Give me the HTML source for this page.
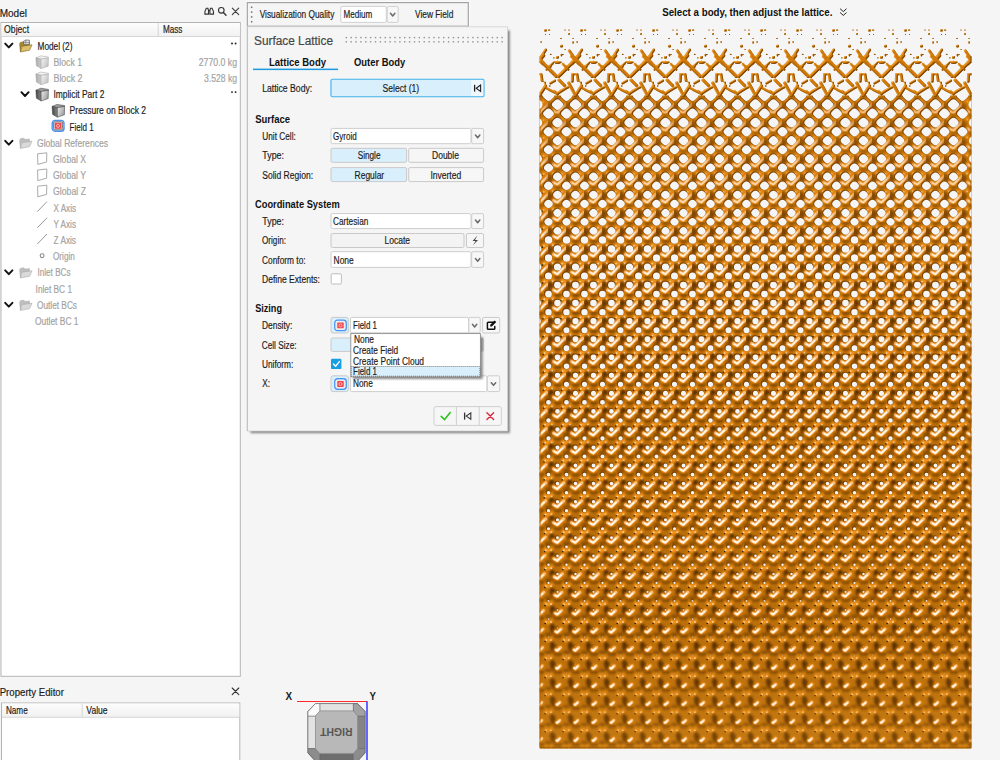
<!DOCTYPE html>
<html><head><meta charset="utf-8"><title>Surface Lattice</title>
<style>
html,body{margin:0;padding:0;background:#f5f5f5;width:1000px;height:760px;overflow:hidden}
svg{display:block;font-family:"Liberation Sans",sans-serif}
text{white-space:pre}
</style></head><body>
<svg width="1000" height="760" viewBox="0 0 1000 760">
<rect width="1000" height="760" fill="#f5f5f5"/>
<g id="model-browser">
<text x="-0.30" y="16.85" stroke="#1c1c1c" stroke-width="0.18" font-size="10" fill="#1c1c1c" textLength="27.30" lengthAdjust="spacingAndGlyphs">Model</text>
<g fill="none" stroke="#333" stroke-width="1.1" stroke-linecap="round">
<path d="M206.3 8.3h1.6l.6 2.2v3.6h-3.6v-2.6zM212.1 8.3h-1.6l-.6 2.2v3.6h3.6v-2.6zM208.5 10.4h1.4"/>
<circle cx="221.3" cy="10.3" r="2.8"/><path d="M223.4 12.5L226 15.2" stroke-width="1.4"/>
<path d="M232.3 8.1L238.7 14.6M238.7 8.1L232.3 14.6" stroke-width="1.15" stroke="#3c3c3c"/>
</g>
<rect x="1.00" y="22.50" width="239.30" height="653.80" fill="#ffffff" stroke="#b4b4b4" stroke-width="1"/>
<linearGradient id="hdr" x1="0" y1="0" x2="0" y2="1"><stop offset="0" stop-color="#fdfdfd"/><stop offset="1" stop-color="#f1f1f1"/></linearGradient>
<rect x="1.50" y="23.00" width="238.30" height="13.20" fill="url(#hdr)"/>
<path d="M1.5 36.5H239.8M158.2 23V36.5" stroke="#d6d6d6" stroke-width="1" fill="none"/>
<text x="4.10" y="33.35" stroke="#1c1c1c" stroke-width="0.18" font-size="10" fill="#1c1c1c" textLength="25.00" lengthAdjust="spacingAndGlyphs">Object</text>
<text x="162.90" y="33.35" stroke="#1c1c1c" stroke-width="0.18" font-size="10" fill="#1c1c1c" textLength="19.50" lengthAdjust="spacingAndGlyphs">Mass</text>
<path d="M5.2 43.60L8.8 47.40L12.4 43.60" fill="none" stroke="#111" stroke-width="1.95" stroke-linecap="round" stroke-linejoin="round"/>
<g transform="translate(0,0.8)">
<g transform="translate(19.00,39.80)">
<path d="M0.6 3.2L1.6 1.6L5 1.2L6 2.4L10.4 2L10.6 5L2.2 6L1.4 11.2Z" fill="#a8872e" stroke="#7d621c" stroke-width="0.5"/>
<path d="M1.4 11.4L3.2 5.6L13 4.2L10.6 9.6Z" fill="#dcc069" stroke="#7d621c" stroke-width="0.6"/>
</g>
<g transform="translate(22.6,38.8)"><path d="M1 1.6L3.2 0.4L6.8 0.6L6.8 4.4L3.2 5.2L1 4.4Z" fill="#ececec" stroke="#555" stroke-width="0.7"/><path d="M3.2 0.6V5M1 2.8H6.8" stroke="#666" stroke-width="0.6"/></g>
</g>
<text x="37.50" y="49.55" stroke="#1c1c1c" stroke-width="0.18" font-size="10" fill="#1c1c1c" textLength="35.00" lengthAdjust="spacingAndGlyphs">Model (2)</text>
<g transform="translate(35.60,55.60)">
<linearGradient id="cg35_1l" x1="0" y1="0" x2="1" y2="0"><stop offset="0" stop-color="#aaaaaa"/><stop offset="1" stop-color="#cfcfcf"/></linearGradient>
<linearGradient id="cg35_1r" x1="0" y1="0" x2="1" y2="0.6"><stop offset="0" stop-color="#f6f6f6"/><stop offset="1" stop-color="#c4c4c4"/></linearGradient>
<path d="M0.3 2.2L5.2 0.2L12.8 1.4L12.8 2.4L5.6 3.6Z" fill="#f0f0f0" stroke="#a4a4a4" stroke-width="0.5"/>
<path d="M0.3 2.2L5.6 3.6L5.6 13L0.8 10.2Z" fill="url(#cg35_1l)" stroke="#a4a4a4" stroke-width="0.5"/>
<path d="M5.6 3.6L12.8 2.2L12.6 10.6L5.6 13Z" fill="url(#cg35_1r)" stroke="#a4a4a4" stroke-width="0.5"/>
</g>
<text x="53.50" y="65.75" stroke="#a2a2a2" stroke-width="0.18" font-size="10" fill="#a2a2a2" textLength="28.50" lengthAdjust="spacingAndGlyphs">Block 1</text>
<g transform="translate(35.60,71.80)">
<linearGradient id="cg35_2l" x1="0" y1="0" x2="1" y2="0"><stop offset="0" stop-color="#aaaaaa"/><stop offset="1" stop-color="#cfcfcf"/></linearGradient>
<linearGradient id="cg35_2r" x1="0" y1="0" x2="1" y2="0.6"><stop offset="0" stop-color="#f6f6f6"/><stop offset="1" stop-color="#c4c4c4"/></linearGradient>
<path d="M0.3 2.2L5.2 0.2L12.8 1.4L12.8 2.4L5.6 3.6Z" fill="#f0f0f0" stroke="#a4a4a4" stroke-width="0.5"/>
<path d="M0.3 2.2L5.6 3.6L5.6 13L0.8 10.2Z" fill="url(#cg35_2l)" stroke="#a4a4a4" stroke-width="0.5"/>
<path d="M5.6 3.6L12.8 2.2L12.6 10.6L5.6 13Z" fill="url(#cg35_2r)" stroke="#a4a4a4" stroke-width="0.5"/>
</g>
<text x="53.50" y="81.95" stroke="#a2a2a2" stroke-width="0.18" font-size="10" fill="#a2a2a2" textLength="29.00" lengthAdjust="spacingAndGlyphs">Block 2</text>
<path d="M21.4 92.20L25.0 96.00L28.6 92.20" fill="none" stroke="#111" stroke-width="1.95" stroke-linecap="round" stroke-linejoin="round"/>
<g transform="translate(35.60,88.00)">
<linearGradient id="cg35_3l" x1="0" y1="0" x2="1" y2="0"><stop offset="0" stop-color="#444444"/><stop offset="1" stop-color="#8a8a8a"/></linearGradient>
<linearGradient id="cg35_3r" x1="0" y1="0" x2="1" y2="0.6"><stop offset="0" stop-color="#f2f2f2"/><stop offset="1" stop-color="#9c9c9c"/></linearGradient>
<path d="M0.3 2.2L5.2 0.2L12.8 1.4L12.8 2.4L5.6 3.6Z" fill="#9a9a9a" stroke="#3a3a3a" stroke-width="0.5"/>
<path d="M0.3 2.2L5.6 3.6L5.6 13L0.8 10.2Z" fill="url(#cg35_3l)" stroke="#3a3a3a" stroke-width="0.5"/>
<path d="M5.6 3.6L12.8 2.2L12.6 10.6L5.6 13Z" fill="url(#cg35_3r)" stroke="#3a3a3a" stroke-width="0.5"/>
</g>
<text x="53.40" y="98.15" stroke="#1c1c1c" stroke-width="0.18" font-size="10" fill="#1c1c1c" textLength="51.00" lengthAdjust="spacingAndGlyphs">Implicit Part 2</text>
<g transform="translate(51.80,104.20)">
<linearGradient id="cg51_4l" x1="0" y1="0" x2="1" y2="0"><stop offset="0" stop-color="#444444"/><stop offset="1" stop-color="#8a8a8a"/></linearGradient>
<linearGradient id="cg51_4r" x1="0" y1="0" x2="1" y2="0.6"><stop offset="0" stop-color="#f2f2f2"/><stop offset="1" stop-color="#9c9c9c"/></linearGradient>
<path d="M0.3 2.2L5.2 0.2L12.8 1.4L12.8 2.4L5.6 3.6Z" fill="#9a9a9a" stroke="#3a3a3a" stroke-width="0.5"/>
<path d="M0.3 2.2L5.6 3.6L5.6 13L0.8 10.2Z" fill="url(#cg51_4l)" stroke="#3a3a3a" stroke-width="0.5"/>
<path d="M5.6 3.6L12.8 2.2L12.6 10.6L5.6 13Z" fill="url(#cg51_4r)" stroke="#3a3a3a" stroke-width="0.5"/>
</g>
<text x="69.60" y="114.35" stroke="#1c1c1c" stroke-width="0.18" font-size="10" fill="#1c1c1c" textLength="76.50" lengthAdjust="spacingAndGlyphs">Pressure on Block 2</text>
<g transform="translate(51.60,119.80) scale(1.0)">
<rect x="0.6" y="0.6" width="11.8" height="10.8" rx="2.8" fill="#e9f1fd" stroke="#4a94f2" stroke-width="1.4"/>
<rect x="2" y="1.9" width="9" height="8.2" rx="1.2" fill="#d6d6d6" stroke="#626262" stroke-width="0.8"/>
<rect x="3.2" y="3" width="6.6" height="6" rx="0.5" fill="#f0444d"/>
<circle cx="6.5" cy="6" r="1.55" fill="none" stroke="#ffd4d6" stroke-width="0.8"/>
</g>
<text x="69.60" y="130.55" stroke="#1c1c1c" stroke-width="0.18" font-size="10" fill="#1c1c1c" textLength="24.00" lengthAdjust="spacingAndGlyphs">Field 1</text>
<path d="M5.2 140.80L8.8 144.60L12.4 140.80" fill="none" stroke="#111" stroke-width="1.95" stroke-linecap="round" stroke-linejoin="round"/>
<g transform="translate(19.00,137.00)">
<path d="M0.6 3.2L1.6 1.6L5 1.2L6 2.4L10.4 2L10.6 5L2.2 6L1.4 11.2Z" fill="#bebebe" stroke="#aaaaaa" stroke-width="0.5"/>
<path d="M1.4 11.4L3.2 5.6L13 4.2L10.6 9.6Z" fill="#dadada" stroke="#aaaaaa" stroke-width="0.6"/>
</g>
<text x="37.00" y="146.75" stroke="#a2a2a2" stroke-width="0.18" font-size="10" fill="#a2a2a2" textLength="71.00" lengthAdjust="spacingAndGlyphs">Global References</text>
<path d="M37.60 153.80L46.80 152.80L46.60 162.00L37.80 164.40Z" fill="#fff" stroke="#a0a0a0" stroke-width="0.9" stroke-linejoin="round"/>
<text x="53.00" y="162.95" stroke="#a2a2a2" stroke-width="0.18" font-size="10" fill="#a2a2a2" textLength="33.00" lengthAdjust="spacingAndGlyphs">Global X</text>
<path d="M37.60 170.00L46.80 169.00L46.60 178.20L37.80 180.60Z" fill="#fff" stroke="#a0a0a0" stroke-width="0.9" stroke-linejoin="round"/>
<text x="53.00" y="179.15" stroke="#a2a2a2" stroke-width="0.18" font-size="10" fill="#a2a2a2" textLength="33.00" lengthAdjust="spacingAndGlyphs">Global Y</text>
<path d="M37.60 186.20L46.80 185.20L46.60 194.40L37.80 196.80Z" fill="#fff" stroke="#a0a0a0" stroke-width="0.9" stroke-linejoin="round"/>
<text x="53.00" y="195.35" stroke="#a2a2a2" stroke-width="0.18" font-size="10" fill="#a2a2a2" textLength="33.00" lengthAdjust="spacingAndGlyphs">Global Z</text>
<path d="M37.30 211.60L47.00 201.60" stroke="#8c8c8c" stroke-width="0.9" fill="none"/>
<text x="53.50" y="211.55" stroke="#a2a2a2" stroke-width="0.18" font-size="10" fill="#a2a2a2" textLength="22.50" lengthAdjust="spacingAndGlyphs">X Axis</text>
<path d="M37.30 227.80L47.00 217.80" stroke="#8c8c8c" stroke-width="0.9" fill="none"/>
<text x="53.50" y="227.75" stroke="#a2a2a2" stroke-width="0.18" font-size="10" fill="#a2a2a2" textLength="22.50" lengthAdjust="spacingAndGlyphs">Y Axis</text>
<path d="M37.30 244.00L47.00 234.00" stroke="#8c8c8c" stroke-width="0.9" fill="none"/>
<text x="53.50" y="243.95" stroke="#a2a2a2" stroke-width="0.18" font-size="10" fill="#a2a2a2" textLength="22.50" lengthAdjust="spacingAndGlyphs">Z Axis</text>
<circle cx="42.1" cy="255.70" r="1.9" fill="none" stroke="#8c8c8c" stroke-width="1.1"/>
<text x="53.00" y="260.15" stroke="#a2a2a2" stroke-width="0.18" font-size="10" fill="#a2a2a2" textLength="21.80" lengthAdjust="spacingAndGlyphs">Origin</text>
<path d="M5.2 270.40L8.8 274.20L12.4 270.40" fill="none" stroke="#111" stroke-width="1.95" stroke-linecap="round" stroke-linejoin="round"/>
<g transform="translate(19.00,266.60)">
<path d="M0.6 3.2L1.6 1.6L5 1.2L6 2.4L10.4 2L10.6 5L2.2 6L1.4 11.2Z" fill="#bebebe" stroke="#aaaaaa" stroke-width="0.5"/>
<path d="M1.4 11.4L3.2 5.6L13 4.2L10.6 9.6Z" fill="#dadada" stroke="#aaaaaa" stroke-width="0.6"/>
</g>
<text x="37.50" y="276.35" stroke="#a2a2a2" stroke-width="0.18" font-size="10" fill="#a2a2a2" textLength="33.00" lengthAdjust="spacingAndGlyphs">Inlet BCs</text>
<text x="35.60" y="292.55" stroke="#a2a2a2" stroke-width="0.18" font-size="10" fill="#a2a2a2" textLength="36.40" lengthAdjust="spacingAndGlyphs">Inlet BC 1</text>
<path d="M5.2 302.80L8.8 306.60L12.4 302.80" fill="none" stroke="#111" stroke-width="1.95" stroke-linecap="round" stroke-linejoin="round"/>
<g transform="translate(19.00,299.00)">
<path d="M0.6 3.2L1.6 1.6L5 1.2L6 2.4L10.4 2L10.6 5L2.2 6L1.4 11.2Z" fill="#bebebe" stroke="#aaaaaa" stroke-width="0.5"/>
<path d="M1.4 11.4L3.2 5.6L13 4.2L10.6 9.6Z" fill="#dadada" stroke="#aaaaaa" stroke-width="0.6"/>
</g>
<text x="37.00" y="308.75" stroke="#a2a2a2" stroke-width="0.18" font-size="10" fill="#a2a2a2" textLength="40.00" lengthAdjust="spacingAndGlyphs">Outlet BCs</text>
<text x="35.00" y="324.95" stroke="#a2a2a2" stroke-width="0.18" font-size="10" fill="#a2a2a2" textLength="43.50" lengthAdjust="spacingAndGlyphs">Outlet BC 1</text>
<text x="198.70" y="65.75" stroke="#a2a2a2" stroke-width="0.18" font-size="10" fill="#a2a2a2" textLength="38.40" lengthAdjust="spacingAndGlyphs">2770.0 kg</text>
<text x="204.00" y="81.95" stroke="#a2a2a2" stroke-width="0.18" font-size="10" fill="#a2a2a2" textLength="33.10" lengthAdjust="spacingAndGlyphs">3.528 kg</text>
<circle cx="232" cy="43.50" r="0.95" fill="#222"/><circle cx="235.6" cy="43.50" r="0.95" fill="#222"/>
<circle cx="232" cy="92.10" r="0.95" fill="#222"/><circle cx="235.6" cy="92.10" r="0.95" fill="#222"/>
</g>
<g id="prop-editor">
<text x="-0.30" y="695.75" stroke="#1c1c1c" stroke-width="0.18" font-size="10" fill="#1c1c1c" textLength="64.20" lengthAdjust="spacingAndGlyphs">Property Editor</text>
<path d="M232.2 688L238.8 694.6M238.8 688L232.2 694.6" stroke="#333" stroke-width="1.1" fill="none" stroke-linecap="round"/>
<rect x="1.50" y="703.00" width="238.30" height="62.00" fill="#ffffff" stroke="#b4b4b4" stroke-width="1"/>
<rect x="2.00" y="703.50" width="237.30" height="13.50" fill="url(#hdr)"/>
<path d="M2 717.3H239.3M82.2 703.5V717.3" stroke="#d6d6d6" stroke-width="1" fill="none"/>
<text x="5.90" y="714.35" stroke="#1c1c1c" stroke-width="0.18" font-size="10" fill="#1c1c1c" textLength="21.80" lengthAdjust="spacingAndGlyphs">Name</text>
<text x="86.30" y="714.35" stroke="#1c1c1c" stroke-width="0.18" font-size="10" fill="#1c1c1c" textLength="21.30" lengthAdjust="spacingAndGlyphs">Value</text>
</g>
<g id="toolbar">
<rect x="246.40" y="1.70" width="222.80" height="25.40" fill="none" stroke="#fdfdfd" stroke-width="0.9"/>
<rect x="247.30" y="2.60" width="221.00" height="23.60" fill="#f5f5f5" stroke="#a0a0a0" stroke-width="1.15"/>
<rect x="250.9" y="6.55" width="1.5" height="1.5" fill="#707070"/>
<rect x="250.9" y="11.35" width="1.5" height="1.5" fill="#707070"/>
<rect x="250.9" y="16.15" width="1.5" height="1.5" fill="#707070"/>
<rect x="250.9" y="20.95" width="1.5" height="1.5" fill="#707070"/>
<text x="259.70" y="18.45" stroke="#1c1c1c" stroke-width="0.18" font-size="10" fill="#1c1c1c" textLength="74.60" lengthAdjust="spacingAndGlyphs">Visualization Quality</text>
<rect x="340.80" y="6.40" width="45.50" height="16.00" fill="#ffffff" stroke="#cfcfcf" stroke-width="1" rx="1.5"/>
<text x="343.40" y="18.45" stroke="#1c1c1c" stroke-width="0.18" font-size="10" fill="#1c1c1c" textLength="28.80" lengthAdjust="spacingAndGlyphs">Medium</text>
<rect x="387.20" y="6.40" width="11.00" height="16.00" fill="#f7f7f7" stroke="#cfcfcf" stroke-width="1" rx="1.5"/>
<path d="M390.50 13.30L392.70 15.90L394.90 13.30" fill="none" stroke="#6a6a6a" stroke-width="1.5" stroke-linecap="round" stroke-linejoin="round"/>
<text x="415.00" y="18.45" stroke="#1c1c1c" stroke-width="0.18" font-size="10" fill="#1c1c1c" textLength="38.30" lengthAdjust="spacingAndGlyphs">View Field</text>
</g>
<g id="panel">
<defs><filter id="blur2" x="-10%" y="-10%" width="120%" height="120%"><feGaussianBlur stdDeviation="1.1"/></filter></defs>
<rect x="250.5" y="30.5" width="259.3" height="402.6" fill="#6e6e6e" filter="url(#blur2)" opacity="0.85"/>
<rect x="247.30" y="26.80" width="260.30" height="404.20" fill="#f5f5f5" stroke="#d2d2d2" stroke-width="0.8"/>
<path d="M247.3 27V431" stroke="#bdbdbd" stroke-width="1"/>
<text x="254.00" y="45.05" stroke="#454545" stroke-width="0.18" font-size="12" fill="#454545" textLength="79.00" lengthAdjust="spacingAndGlyphs">Surface Lattice</text>
<rect x="345.60" y="36.9" width="1.4" height="1.4" fill="#939393"/><rect x="345.60" y="41.1" width="1.4" height="1.4" fill="#939393"/>
<rect x="350.47" y="36.9" width="1.4" height="1.4" fill="#939393"/><rect x="350.47" y="41.1" width="1.4" height="1.4" fill="#939393"/>
<rect x="355.34" y="36.9" width="1.4" height="1.4" fill="#939393"/><rect x="355.34" y="41.1" width="1.4" height="1.4" fill="#939393"/>
<rect x="360.21" y="36.9" width="1.4" height="1.4" fill="#939393"/><rect x="360.21" y="41.1" width="1.4" height="1.4" fill="#939393"/>
<rect x="365.08" y="36.9" width="1.4" height="1.4" fill="#939393"/><rect x="365.08" y="41.1" width="1.4" height="1.4" fill="#939393"/>
<rect x="369.95" y="36.9" width="1.4" height="1.4" fill="#939393"/><rect x="369.95" y="41.1" width="1.4" height="1.4" fill="#939393"/>
<rect x="374.82" y="36.9" width="1.4" height="1.4" fill="#939393"/><rect x="374.82" y="41.1" width="1.4" height="1.4" fill="#939393"/>
<rect x="379.69" y="36.9" width="1.4" height="1.4" fill="#939393"/><rect x="379.69" y="41.1" width="1.4" height="1.4" fill="#939393"/>
<rect x="384.56" y="36.9" width="1.4" height="1.4" fill="#939393"/><rect x="384.56" y="41.1" width="1.4" height="1.4" fill="#939393"/>
<rect x="389.43" y="36.9" width="1.4" height="1.4" fill="#939393"/><rect x="389.43" y="41.1" width="1.4" height="1.4" fill="#939393"/>
<rect x="394.30" y="36.9" width="1.4" height="1.4" fill="#939393"/><rect x="394.30" y="41.1" width="1.4" height="1.4" fill="#939393"/>
<rect x="399.17" y="36.9" width="1.4" height="1.4" fill="#939393"/><rect x="399.17" y="41.1" width="1.4" height="1.4" fill="#939393"/>
<rect x="404.04" y="36.9" width="1.4" height="1.4" fill="#939393"/><rect x="404.04" y="41.1" width="1.4" height="1.4" fill="#939393"/>
<rect x="408.91" y="36.9" width="1.4" height="1.4" fill="#939393"/><rect x="408.91" y="41.1" width="1.4" height="1.4" fill="#939393"/>
<rect x="413.78" y="36.9" width="1.4" height="1.4" fill="#939393"/><rect x="413.78" y="41.1" width="1.4" height="1.4" fill="#939393"/>
<rect x="418.65" y="36.9" width="1.4" height="1.4" fill="#939393"/><rect x="418.65" y="41.1" width="1.4" height="1.4" fill="#939393"/>
<rect x="423.52" y="36.9" width="1.4" height="1.4" fill="#939393"/><rect x="423.52" y="41.1" width="1.4" height="1.4" fill="#939393"/>
<rect x="428.39" y="36.9" width="1.4" height="1.4" fill="#939393"/><rect x="428.39" y="41.1" width="1.4" height="1.4" fill="#939393"/>
<rect x="433.26" y="36.9" width="1.4" height="1.4" fill="#939393"/><rect x="433.26" y="41.1" width="1.4" height="1.4" fill="#939393"/>
<rect x="438.13" y="36.9" width="1.4" height="1.4" fill="#939393"/><rect x="438.13" y="41.1" width="1.4" height="1.4" fill="#939393"/>
<rect x="443.00" y="36.9" width="1.4" height="1.4" fill="#939393"/><rect x="443.00" y="41.1" width="1.4" height="1.4" fill="#939393"/>
<rect x="447.87" y="36.9" width="1.4" height="1.4" fill="#939393"/><rect x="447.87" y="41.1" width="1.4" height="1.4" fill="#939393"/>
<rect x="452.74" y="36.9" width="1.4" height="1.4" fill="#939393"/><rect x="452.74" y="41.1" width="1.4" height="1.4" fill="#939393"/>
<rect x="457.61" y="36.9" width="1.4" height="1.4" fill="#939393"/><rect x="457.61" y="41.1" width="1.4" height="1.4" fill="#939393"/>
<rect x="462.48" y="36.9" width="1.4" height="1.4" fill="#939393"/><rect x="462.48" y="41.1" width="1.4" height="1.4" fill="#939393"/>
<rect x="467.35" y="36.9" width="1.4" height="1.4" fill="#939393"/><rect x="467.35" y="41.1" width="1.4" height="1.4" fill="#939393"/>
<rect x="472.22" y="36.9" width="1.4" height="1.4" fill="#939393"/><rect x="472.22" y="41.1" width="1.4" height="1.4" fill="#939393"/>
<rect x="477.09" y="36.9" width="1.4" height="1.4" fill="#939393"/><rect x="477.09" y="41.1" width="1.4" height="1.4" fill="#939393"/>
<rect x="481.96" y="36.9" width="1.4" height="1.4" fill="#939393"/><rect x="481.96" y="41.1" width="1.4" height="1.4" fill="#939393"/>
<rect x="486.83" y="36.9" width="1.4" height="1.4" fill="#939393"/><rect x="486.83" y="41.1" width="1.4" height="1.4" fill="#939393"/>
<rect x="491.70" y="36.9" width="1.4" height="1.4" fill="#939393"/><rect x="491.70" y="41.1" width="1.4" height="1.4" fill="#939393"/>
<rect x="496.57" y="36.9" width="1.4" height="1.4" fill="#939393"/><rect x="496.57" y="41.1" width="1.4" height="1.4" fill="#939393"/>
<rect x="501.44" y="36.9" width="1.4" height="1.4" fill="#939393"/><rect x="501.44" y="41.1" width="1.4" height="1.4" fill="#939393"/>
<text x="269.00" y="66.05" font-size="10" fill="#111" font-weight="bold" textLength="57.00" lengthAdjust="spacingAndGlyphs">Lattice Body</text>
<text x="354.00" y="66.05" font-size="10" fill="#111" font-weight="bold" textLength="51.20" lengthAdjust="spacingAndGlyphs">Outer Body</text>
<rect x="253.00" y="68.60" width="85.00" height="1.50" fill="#1b9ae0"/>
<text x="262.20" y="92.25" stroke="#1c1c1c" stroke-width="0.18" font-size="10" fill="#1c1c1c" textLength="50.00" lengthAdjust="spacingAndGlyphs">Lattice Body:</text>
<rect x="331.00" y="79.20" width="153.00" height="17.60" fill="#d9f0fc" stroke="#3fb4ea" stroke-width="1.15" rx="1.2"/>
<rect x="471.20" y="80.00" width="12.10" height="16.00" fill="#eef8fd"/>
<text x="382.50" y="92.25" stroke="#1c1c1c" stroke-width="0.18" font-size="10" fill="#1c1c1c" textLength="36.70" lengthAdjust="spacingAndGlyphs">Select (1)</text>
<path d="M474.6 84.8V91.6" stroke="#222" stroke-width="1.3" fill="none"/><path d="M480.6 85L476.2 88.2L480.6 91.4Z" fill="none" stroke="#222" stroke-width="1.1" stroke-linejoin="miter"/>
<text x="255.20" y="123.35" font-size="10" fill="#111" font-weight="bold" textLength="34.80" lengthAdjust="spacingAndGlyphs">Surface</text>
<text x="262.30" y="139.75" stroke="#1c1c1c" stroke-width="0.18" font-size="10" fill="#1c1c1c" textLength="33.50" lengthAdjust="spacingAndGlyphs">Unit Cell:</text>
<rect x="331.00" y="128.40" width="140.00" height="15.30" fill="#ffffff" stroke="#cdcdcd" stroke-width="1" rx="1.5"/>
<rect x="471.70" y="128.40" width="11.90" height="15.30" fill="#f7f7f7" stroke="#cdcdcd" stroke-width="1" rx="1.5"/>
<path d="M475.45 135.05L477.65 137.65L479.85 135.05" fill="none" stroke="#6a6a6a" stroke-width="1.5" stroke-linecap="round" stroke-linejoin="round"/>
<text x="333.00" y="139.75" stroke="#1c1c1c" stroke-width="0.18" font-size="10" fill="#1c1c1c" textLength="23.70" lengthAdjust="spacingAndGlyphs">Gyroid</text>
<text x="262.30" y="159.35" stroke="#1c1c1c" stroke-width="0.18" font-size="10" fill="#1c1c1c" textLength="21.70" lengthAdjust="spacingAndGlyphs">Type:</text>
<rect x="331.00" y="148.30" width="75.60" height="14.00" fill="#d9f0fc" stroke="#c9c9c9" stroke-width="1" rx="1.5"/>
<text x="357.70" y="159.35" stroke="#1c1c1c" stroke-width="0.18" font-size="10" fill="#1c1c1c" textLength="22.80" lengthAdjust="spacingAndGlyphs">Single</text>
<rect x="408.70" y="148.30" width="74.90" height="14.00" fill="#f6f6f6" stroke="#c9c9c9" stroke-width="1" rx="1.5"/>
<text x="432.00" y="159.35" stroke="#1c1c1c" stroke-width="0.18" font-size="10" fill="#1c1c1c" textLength="27.00" lengthAdjust="spacingAndGlyphs">Double</text>
<text x="262.30" y="178.55" stroke="#1c1c1c" stroke-width="0.18" font-size="10" fill="#1c1c1c" textLength="50.70" lengthAdjust="spacingAndGlyphs">Solid Region:</text>
<rect x="331.00" y="167.60" width="75.60" height="14.00" fill="#d9f0fc" stroke="#c9c9c9" stroke-width="1" rx="1.5"/>
<text x="354.60" y="178.55" stroke="#1c1c1c" stroke-width="0.18" font-size="10" fill="#1c1c1c" textLength="29.60" lengthAdjust="spacingAndGlyphs">Regular</text>
<rect x="408.70" y="167.60" width="74.90" height="14.00" fill="#f6f6f6" stroke="#c9c9c9" stroke-width="1" rx="1.5"/>
<text x="430.40" y="178.55" stroke="#1c1c1c" stroke-width="0.18" font-size="10" fill="#1c1c1c" textLength="30.80" lengthAdjust="spacingAndGlyphs">Inverted</text>
<text x="255.00" y="208.45" font-size="10" fill="#111" font-weight="bold" textLength="84.70" lengthAdjust="spacingAndGlyphs">Coordinate System</text>
<text x="262.30" y="224.65" stroke="#1c1c1c" stroke-width="0.18" font-size="10" fill="#1c1c1c" textLength="21.70" lengthAdjust="spacingAndGlyphs">Type:</text>
<rect x="331.00" y="213.60" width="140.00" height="15.00" fill="#ffffff" stroke="#cdcdcd" stroke-width="1" rx="1.5"/>
<rect x="471.70" y="213.60" width="11.90" height="15.00" fill="#f7f7f7" stroke="#cdcdcd" stroke-width="1" rx="1.5"/>
<path d="M475.45 220.10L477.65 222.70L479.85 220.10" fill="none" stroke="#6a6a6a" stroke-width="1.5" stroke-linecap="round" stroke-linejoin="round"/>
<text x="333.00" y="224.65" stroke="#1c1c1c" stroke-width="0.18" font-size="10" fill="#1c1c1c" textLength="35.40" lengthAdjust="spacingAndGlyphs">Cartesian</text>
<text x="262.00" y="244.25" stroke="#1c1c1c" stroke-width="0.18" font-size="10" fill="#1c1c1c" textLength="24.00" lengthAdjust="spacingAndGlyphs">Origin:</text>
<rect x="331.00" y="233.50" width="133.00" height="14.00" fill="#f3f3f3" stroke="#c9c9c9" stroke-width="1" rx="1.5"/>
<text x="384.50" y="244.25" stroke="#1c1c1c" stroke-width="0.18" font-size="10" fill="#1c1c1c" textLength="25.60" lengthAdjust="spacingAndGlyphs">Locate</text>
<rect x="466.40" y="233.50" width="17.20" height="14.00" fill="#f6f6f6" stroke="#c9c9c9" stroke-width="1" rx="1.5"/>
<path d="M477.4 235.6L472.6 240.9H475.6L472.8 245.6L478 240H475Z" fill="#444"/>
<text x="262.00" y="263.55" stroke="#1c1c1c" stroke-width="0.18" font-size="10" fill="#1c1c1c" textLength="43.60" lengthAdjust="spacingAndGlyphs">Conform to:</text>
<rect x="331.00" y="251.70" width="140.00" height="15.70" fill="#ffffff" stroke="#cdcdcd" stroke-width="1" rx="1.5"/>
<rect x="471.70" y="251.70" width="11.90" height="15.70" fill="#f7f7f7" stroke="#cdcdcd" stroke-width="1" rx="1.5"/>
<path d="M475.45 258.55L477.65 261.15L479.85 258.55" fill="none" stroke="#6a6a6a" stroke-width="1.5" stroke-linecap="round" stroke-linejoin="round"/>
<text x="333.60" y="263.55" stroke="#1c1c1c" stroke-width="0.18" font-size="10" fill="#1c1c1c" textLength="20.10" lengthAdjust="spacingAndGlyphs">None</text>
<text x="262.00" y="283.05" stroke="#1c1c1c" stroke-width="0.18" font-size="10" fill="#1c1c1c" textLength="58.00" lengthAdjust="spacingAndGlyphs">Define Extents:</text>
<rect x="331.20" y="273.80" width="10.20" height="10.20" fill="#ffffff" stroke="#bdbdbd" stroke-width="1" rx="1.2"/>
<text x="255.20" y="312.35" font-size="10" fill="#111" font-weight="bold" textLength="26.80" lengthAdjust="spacingAndGlyphs">Sizing</text>
<text x="262.00" y="329.15" stroke="#1c1c1c" stroke-width="0.18" font-size="10" fill="#1c1c1c" textLength="30.30" lengthAdjust="spacingAndGlyphs">Density:</text>
<rect x="331.00" y="317.40" width="17.30" height="15.60" fill="#d9f0fc" stroke="#c9c9c9" stroke-width="1" rx="2"/>
<g transform="translate(334.20,319.60) scale(0.97)">
<rect x="0.6" y="0.6" width="11.8" height="10.8" rx="2.8" fill="#e9f1fd" stroke="#4a94f2" stroke-width="1.4"/>
<rect x="1.6" y="1.6" width="9.8" height="8.8" rx="1.6" fill="#ececec"/>
<rect x="3.2" y="3" width="6.6" height="6" rx="0.5" fill="#f0444d"/>
<circle cx="6.5" cy="6" r="1.55" fill="none" stroke="#ffd4d6" stroke-width="0.8"/>
</g>
<rect x="350.40" y="317.40" width="118.10" height="15.40" fill="#ffffff" stroke="#cdcdcd" stroke-width="1" rx="1.5"/>
<text x="353.00" y="329.15" stroke="#1c1c1c" stroke-width="0.18" font-size="10" fill="#1c1c1c" textLength="24.00" lengthAdjust="spacingAndGlyphs">Field 1</text>
<rect x="468.80" y="317.40" width="11.40" height="15.40" fill="#f7f7f7" stroke="#cdcdcd" stroke-width="1" rx="1.5"/>
<path d="M472.40 324.30L474.60 326.90L476.80 324.30" fill="none" stroke="#6a6a6a" stroke-width="1.5" stroke-linecap="round" stroke-linejoin="round"/>
<rect x="482.60" y="317.40" width="17.10" height="15.60" fill="#f7f7f7" stroke="#c9c9c9" stroke-width="1" rx="1.5"/>
<path d="M494 322.3H488.2Q487.4 322.3 487.4 323.1V328.4Q487.4 329.2 488.2 329.2H494Q494.8 329.2 494.8 328.4V326.4" fill="none" stroke="#111" stroke-width="1.5" stroke-linecap="round"/>
<path d="M490.4 326.6L490 324.9L494.6 320.4L496.3 322.1L491.9 326.4Z" fill="#111"/>
<text x="261.80" y="348.55" stroke="#1c1c1c" stroke-width="0.18" font-size="10" fill="#1c1c1c" textLength="34.70" lengthAdjust="spacingAndGlyphs">Cell Size:</text>
<rect x="331.00" y="338.00" width="152.60" height="13.40" fill="#d9f0fc" stroke="#c9c9c9" stroke-width="1" rx="1.5"/>
<rect x="481.00" y="338.50" width="2.20" height="12.50" fill="#c4c4c4"/>
<text x="262.00" y="368.35" stroke="#1c1c1c" stroke-width="0.18" font-size="10" fill="#1c1c1c" textLength="31.30" lengthAdjust="spacingAndGlyphs">Uniform:</text>
<rect x="331.00" y="358.70" width="10.40" height="10.40" fill="#169fe3" rx="1.2"/>
<path d="M333.4 364L335.6 366.2L339.3 361.6" fill="none" stroke="#fff" stroke-width="1.4" stroke-linecap="round" stroke-linejoin="round"/>
<text x="262.20" y="387.25" stroke="#1c1c1c" stroke-width="0.18" font-size="10" fill="#1c1c1c" textLength="7.80" lengthAdjust="spacingAndGlyphs">X:</text>
<rect x="331.00" y="375.80" width="17.30" height="15.80" fill="#d9f0fc" stroke="#c9c9c9" stroke-width="1" rx="2"/>
<g transform="translate(334.20,378.20) scale(0.97)">
<rect x="0.6" y="0.6" width="11.8" height="10.8" rx="2.8" fill="#e9f1fd" stroke="#4a94f2" stroke-width="1.4"/>
<rect x="1.6" y="1.6" width="9.8" height="8.8" rx="1.6" fill="#ececec"/>
<rect x="3.2" y="3" width="6.6" height="6" rx="0.5" fill="#f0444d"/>
<circle cx="6.5" cy="6" r="1.55" fill="none" stroke="#ffd4d6" stroke-width="0.8"/>
</g>
<rect x="350.40" y="375.80" width="136.60" height="15.80" fill="#ffffff" stroke="#cdcdcd" stroke-width="1" rx="1.5"/>
<text x="353.00" y="387.25" stroke="#1c1c1c" stroke-width="0.18" font-size="10" fill="#1c1c1c" textLength="19.80" lengthAdjust="spacingAndGlyphs">None</text>
<rect x="487.30" y="375.80" width="12.40" height="15.80" fill="#f7f7f7" stroke="#cdcdcd" stroke-width="1" rx="1.5"/>
<path d="M491.30 382.70L493.50 385.30L495.70 382.70" fill="none" stroke="#6a6a6a" stroke-width="1.5" stroke-linecap="round" stroke-linejoin="round"/>
<rect x="353" y="337" width="129.6" height="42" fill="#555" filter="url(#blur2)" opacity="0.7"/>
<rect x="350.80" y="333.60" width="129.60" height="43.20" fill="#ffffff" stroke="#8e8e8e" stroke-width="0.9"/>
<text x="354.00" y="343.15" stroke="#1c1c1c" stroke-width="0.18" font-size="10" fill="#1c1c1c" textLength="20.00" lengthAdjust="spacingAndGlyphs">None</text>
<text x="353.00" y="353.95" stroke="#1c1c1c" stroke-width="0.18" font-size="10" fill="#1c1c1c" textLength="45.20" lengthAdjust="spacingAndGlyphs">Create Field</text>
<text x="353.00" y="364.55" stroke="#1c1c1c" stroke-width="0.18" font-size="10" fill="#1c1c1c" textLength="71.00" lengthAdjust="spacingAndGlyphs">Create Point Cloud</text>
<rect x="351.40" y="366.50" width="128.40" height="9.70" fill="#d9f0fc" stroke="#444" stroke-width="0.7" stroke-dasharray="1 1"/>
<text x="353.00" y="375.05" stroke="#1c1c1c" stroke-width="0.18" font-size="10" fill="#1c1c1c" textLength="24.00" lengthAdjust="spacingAndGlyphs">Field 1</text>
<rect x="434.00" y="406.60" width="67.30" height="18.80" fill="#f6f6f6" stroke="#cfcfcf" stroke-width="1" rx="2"/>
<path d="M456.4 406.6V425.4M479.2 406.6V425.4" stroke="#cfcfcf" stroke-width="1"/>
<path d="M441.2 416.4L444.6 419.6L450.2 412.6" fill="none" stroke="#2fc31f" stroke-width="1.6" stroke-linecap="round" stroke-linejoin="round"/>
<path d="M464.6 412.6V419.6" stroke="#333" stroke-width="1.3" fill="none"/><path d="M470.8 412.9L466.2 416.1L470.8 419.3Z" fill="none" stroke="#333" stroke-width="1.1"/>
<path d="M486.9 412.7L493.6 419.5M493.6 412.7L486.9 419.5" stroke="#d8263a" stroke-width="1.3" fill="none" stroke-linecap="round"/>
</g>
<text x="662.20" y="15.65" font-size="10" fill="#111" font-weight="bold" textLength="170.20" lengthAdjust="spacingAndGlyphs">Select a body, then adjust the lattice.</text>
<path d="M840.4 9L843.3 11.6L846.2 9M840.4 12.8L843.3 15.4L846.2 12.8" fill="none" stroke="#222" stroke-width="1" stroke-linecap="round" stroke-linejoin="round"/>
<g id="viewcube">
<text x="285.60" y="699.55" font-size="10" fill="#222" font-weight="bold" textLength="6.60" lengthAdjust="spacingAndGlyphs">X</text>
<text x="369.60" y="699.55" font-size="10" fill="#222" font-weight="bold" textLength="6.40" lengthAdjust="spacingAndGlyphs">Y</text>
<path d="M297 701.5H367" stroke="#ff2a2a" stroke-width="1.1"/>
<path d="M367 701.2V760" stroke="#2a2aff" stroke-width="1.4"/>
<g stroke="#666" stroke-width="0.5">
<path d="M315.5 703.6H357.5L365 711.5V753L357.5 761H315.5L308 753V711.5Z" fill="#999" stroke="#4a4a4a" stroke-width="0.9"/>
<path d="M319.8 703.6H353.4V711H319.8Z" fill="#e2e2e2"/>
<path d="M308 716H315.5V748.5H308Z" fill="#e2e2e2"/>
<path d="M357.5 716H365V748.5H357.5Z" fill="#848484"/>
<path d="M319.8 753.4H353.4V761H319.8Z" fill="#6e6e6e"/>
<path d="M308 711.5L315.5 703.6H319.8V711L315.5 716H308Z" fill="#fbfbfb"/>
<path d="M353.4 703.6H357.5L365 711.5V716H357.5L353.4 711Z" fill="#a2a2a2"/>
<path d="M308 748.5H315.5L319.8 753.4V761H315.5L308 753Z" fill="#8c8c8c"/>
<path d="M357.5 748.5H365V753L357.5 761H353.4V753.4Z" fill="#8c8c8c"/>
<path d="M319.8 711H353.4L357.5 716V748.5L353.4 753.4H319.8L315.5 748.5V716Z" fill="#b8b8b8" stroke="#8a8a8a"/>
</g>
<g transform="translate(336.3,732.4) rotate(180)">
<text x="-16.25" y="4.15" font-size="10" fill="#575757" font-weight="bold" textLength="32.50" lengthAdjust="spacingAndGlyphs">RIGHT</text>
</g>
</g>
<g id="lattice">
<defs>
<linearGradient id="lbase" x1="0" y1="0" x2="0" y2="1"><stop offset="0" stop-color="#cf7a08"/><stop offset="0.25" stop-color="#c67408"/><stop offset="0.5" stop-color="#b86c07"/><stop offset="0.85" stop-color="#ba6f0a"/><stop offset="1" stop-color="#c47913"/></linearGradient>
<filter id="tb" filterUnits="userSpaceOnUse" x="-40" y="-40" width="80" height="80"><feGaussianBlur stdDeviation="0.6"/></filter>
<filter id="tb2" filterUnits="userSpaceOnUse" x="-40" y="-40" width="80" height="80"><feGaussianBlur stdDeviation="1.0"/></filter>
<clipPath id="lclip2"><rect x="539.5" y="95.85" width="432.0" height="652.95"/></clipPath>
<clipPath id="lclip"><rect x="539.5" y="94.05" width="432.0" height="654.45"/></clipPath>
</defs>
<path d="M539.5 95.55H971.5V747.3Q971.5 748.5 970.0 748.5H541.0Q539.5 748.5 539.5 747.3Z" fill="url(#lbase)"/>
<pattern id="ta3" x="539" y="86" width="18" height="20" patternUnits="userSpaceOnUse"><g transform="translate(9.5,9.55)"><g filter="url(#tb2)"><ellipse cx="0" cy="-6.94" rx="3.4" ry="1.6" fill="#743f00" opacity="0.28"/><path d="M-6.28 3.92Q0 10.04 6.28 3.92" fill="none" stroke="#ff9c20" stroke-width="3.3" stroke-linecap="round" opacity="0.40"/></g><g filter="url(#tb)"><circle cx="-5.33" cy="6.75" r="0.95" fill="#ffe6c0" opacity="0.30"/><circle cx="5.02" cy="6.28" r="0.95" fill="#ffe6c0" opacity="0.30"/><circle cx="-7.34" cy="8.34" r="0.85" fill="#1e0e00" opacity="0.30"/></g></g></pattern>
<rect x="539.5" y="95.55" width="432.0" height="9.00" fill="url(#ta3)"/>
<pattern id="tb4" x="530" y="95" width="18" height="20" patternUnits="userSpaceOnUse"><g transform="translate(9.5,9.58)"><g filter="url(#tb2)"><ellipse cx="-26.29" cy="1.2" rx="2.9" ry="5.6" fill="#552c00" opacity="0.37" transform="rotate(-14 -26.29 1.2)"/><ellipse cx="-8.29" cy="1.2" rx="2.9" ry="5.6" fill="#552c00" opacity="0.37" transform="rotate(-14 -8.29 1.2)"/><ellipse cx="9.71" cy="1.2" rx="2.9" ry="5.6" fill="#552c00" opacity="0.37" transform="rotate(-14 9.71 1.2)"/><ellipse cx="0.6" cy="11.00" rx="4.4" ry="1.9" fill="#743f00" opacity="0.34"/><ellipse cx="0.6" cy="-7.05" rx="4.4" ry="1.9" fill="#743f00" opacity="0.34"/><path d="M-4.23 6.11L-0.20 8.34L9.81 -1.35" fill="none" stroke="#f08c14" stroke-width="4.4" stroke-linecap="round" stroke-linejoin="round" opacity="0.43"/></g><g filter="url(#tb)"><path d="M-4.00 6.24L-0.20 8.34L9.24 -0.80" fill="none" stroke="#ffc07a" stroke-width="3.0" stroke-linecap="round" stroke-linejoin="round" opacity="0.38"/><path d="M-3.05 6.77L-0.20 8.34L6.88 1.49" fill="none" stroke="#fffaf0" stroke-width="1.6" stroke-linecap="round" stroke-linejoin="round" opacity="0.38"/></g></g></pattern>
<rect x="539.5" y="95.58" width="432.0" height="18.00" fill="url(#tb4)"/>
<pattern id="ta4" x="539" y="104" width="18" height="20" patternUnits="userSpaceOnUse"><g transform="translate(9.5,9.60)"><g filter="url(#tb2)"><ellipse cx="0" cy="-6.69" rx="3.4" ry="1.6" fill="#743f00" opacity="0.32"/><path d="M-6.07 3.79Q0 9.72 6.07 3.79" fill="none" stroke="#ff9c20" stroke-width="3.3" stroke-linecap="round" opacity="0.45"/></g><g filter="url(#tb)"><circle cx="-5.16" cy="6.53" r="0.95" fill="#ffe6c0" opacity="0.36"/><circle cx="4.86" cy="6.07" r="0.95" fill="#ffe6c0" opacity="0.36"/><circle cx="-7.09" cy="8.09" r="0.85" fill="#1e0e00" opacity="0.36"/></g></g></pattern>
<rect x="539.5" y="104.60" width="432.0" height="18.00" fill="url(#ta4)"/>
<pattern id="tb5" x="530" y="113" width="18" height="20" patternUnits="userSpaceOnUse"><g transform="translate(9.5,9.62)"><g filter="url(#tb2)"><ellipse cx="-25.99" cy="1.2" rx="2.9" ry="5.6" fill="#552c00" opacity="0.42" transform="rotate(-14 -25.99 1.2)"/><ellipse cx="-7.99" cy="1.2" rx="2.9" ry="5.6" fill="#552c00" opacity="0.42" transform="rotate(-14 -7.99 1.2)"/><ellipse cx="10.01" cy="1.2" rx="2.9" ry="5.6" fill="#552c00" opacity="0.42" transform="rotate(-14 10.01 1.2)"/><ellipse cx="0.6" cy="11.00" rx="4.4" ry="1.9" fill="#743f00" opacity="0.37"/><ellipse cx="0.6" cy="-7.05" rx="4.4" ry="1.9" fill="#743f00" opacity="0.37"/><path d="M-4.23 5.82L-0.20 8.04L9.49 -1.33" fill="none" stroke="#f08c14" stroke-width="4.4" stroke-linecap="round" stroke-linejoin="round" opacity="0.48"/></g><g filter="url(#tb)"><path d="M-4.00 5.94L-0.20 8.04L8.94 -0.80" fill="none" stroke="#ffc07a" stroke-width="3.0" stroke-linecap="round" stroke-linejoin="round" opacity="0.43"/><path d="M-3.05 6.47L-0.20 8.04L6.66 1.41" fill="none" stroke="#fffaf0" stroke-width="1.6" stroke-linecap="round" stroke-linejoin="round" opacity="0.43"/></g></g></pattern>
<rect x="539.5" y="113.62" width="432.0" height="18.00" fill="url(#tb5)"/>
<pattern id="ta5" x="539" y="122" width="18" height="20" patternUnits="userSpaceOnUse"><g transform="translate(9.5,9.65)"><g filter="url(#tb2)"><ellipse cx="0" cy="-6.44" rx="3.4" ry="1.6" fill="#743f00" opacity="0.35"/><path d="M-5.87 3.67Q0 9.40 5.87 3.67" fill="none" stroke="#ff9c20" stroke-width="3.3" stroke-linecap="round" opacity="0.50"/></g><g filter="url(#tb)"><circle cx="-4.99" cy="6.31" r="0.95" fill="#ffe6c0" opacity="0.41"/><circle cx="4.70" cy="5.87" r="0.95" fill="#ffe6c0" opacity="0.41"/><circle cx="-6.84" cy="7.84" r="0.85" fill="#1e0e00" opacity="0.41"/></g></g></pattern>
<rect x="539.5" y="122.65" width="432.0" height="18.00" fill="url(#ta5)"/>
<pattern id="tb6" x="530" y="131" width="18" height="20" patternUnits="userSpaceOnUse"><g transform="translate(9.5,9.68)"><g filter="url(#tb2)"><ellipse cx="-25.80" cy="1.2" rx="2.9" ry="5.6" fill="#552c00" opacity="0.46" transform="rotate(-14 -25.80 1.2)"/><ellipse cx="-7.80" cy="1.2" rx="2.9" ry="5.6" fill="#552c00" opacity="0.46" transform="rotate(-14 -7.80 1.2)"/><ellipse cx="10.20" cy="1.2" rx="2.9" ry="5.6" fill="#552c00" opacity="0.46" transform="rotate(-14 10.20 1.2)"/><ellipse cx="0.6" cy="11.00" rx="4.4" ry="1.9" fill="#743f00" opacity="0.41"/><ellipse cx="0.6" cy="-7.05" rx="4.4" ry="1.9" fill="#743f00" opacity="0.41"/><path d="M-4.23 5.62L-0.20 7.85L9.28 -1.32" fill="none" stroke="#f08c14" stroke-width="4.4" stroke-linecap="round" stroke-linejoin="round" opacity="0.53"/></g><g filter="url(#tb)"><path d="M-4.00 5.75L-0.20 7.85L8.75 -0.80" fill="none" stroke="#ffc07a" stroke-width="3.0" stroke-linecap="round" stroke-linejoin="round" opacity="0.48"/><path d="M-3.05 6.27L-0.20 7.85L6.51 1.36" fill="none" stroke="#fffaf0" stroke-width="1.6" stroke-linecap="round" stroke-linejoin="round" opacity="0.48"/></g></g></pattern>
<rect x="539.5" y="131.68" width="432.0" height="18.00" fill="url(#tb6)"/>
<pattern id="ta6" x="539" y="140" width="18" height="20" patternUnits="userSpaceOnUse"><g transform="translate(9.5,9.70)"><g filter="url(#tb2)"><ellipse cx="0" cy="-6.32" rx="3.4" ry="1.6" fill="#743f00" opacity="0.38"/><path d="M-5.77 3.61Q0 9.24 5.77 3.61" fill="none" stroke="#ff9c20" stroke-width="3.3" stroke-linecap="round" opacity="0.56"/></g><g filter="url(#tb)"><circle cx="-4.91" cy="6.21" r="0.95" fill="#ffe6c0" opacity="0.47"/><circle cx="4.62" cy="5.77" r="0.95" fill="#ffe6c0" opacity="0.47"/><circle cx="-6.72" cy="7.72" r="0.85" fill="#1e0e00" opacity="0.47"/></g></g></pattern>
<rect x="539.5" y="140.70" width="432.0" height="18.00" fill="url(#ta6)"/>
<pattern id="tb7" x="530" y="149" width="18" height="20" patternUnits="userSpaceOnUse"><g transform="translate(9.5,9.73)"><g filter="url(#tb2)"><ellipse cx="-25.74" cy="1.2" rx="2.9" ry="5.6" fill="#552c00" opacity="0.50" transform="rotate(-14 -25.74 1.2)"/><ellipse cx="-7.74" cy="1.2" rx="2.9" ry="5.6" fill="#552c00" opacity="0.50" transform="rotate(-14 -7.74 1.2)"/><ellipse cx="10.26" cy="1.2" rx="2.9" ry="5.6" fill="#552c00" opacity="0.50" transform="rotate(-14 10.26 1.2)"/><ellipse cx="0.6" cy="11.00" rx="4.4" ry="1.9" fill="#743f00" opacity="0.45"/><ellipse cx="0.6" cy="-7.05" rx="4.4" ry="1.9" fill="#743f00" opacity="0.45"/><path d="M-4.23 5.56L-0.20 7.79L9.22 -1.32" fill="none" stroke="#f08c14" stroke-width="4.4" stroke-linecap="round" stroke-linejoin="round" opacity="0.58"/></g><g filter="url(#tb)"><path d="M-4.00 5.69L-0.20 7.79L8.69 -0.80" fill="none" stroke="#ffc07a" stroke-width="3.0" stroke-linecap="round" stroke-linejoin="round" opacity="0.54"/><path d="M-3.05 6.21L-0.20 7.79L6.47 1.35" fill="none" stroke="#fffaf0" stroke-width="1.6" stroke-linecap="round" stroke-linejoin="round" opacity="0.54"/></g></g></pattern>
<rect x="539.5" y="149.73" width="432.0" height="18.00" fill="url(#tb7)"/>
<pattern id="ta7" x="539" y="158" width="18" height="20" patternUnits="userSpaceOnUse"><g transform="translate(9.5,9.75)"><g filter="url(#tb2)"><ellipse cx="0" cy="-6.26" rx="3.4" ry="1.6" fill="#743f00" opacity="0.42"/><path d="M-5.73 3.58Q0 9.16 5.73 3.58" fill="none" stroke="#ff9c20" stroke-width="3.3" stroke-linecap="round" opacity="0.61"/></g><g filter="url(#tb)"><circle cx="-4.87" cy="6.16" r="0.95" fill="#ffe6c0" opacity="0.52"/><circle cx="4.58" cy="5.73" r="0.95" fill="#ffe6c0" opacity="0.52"/><circle cx="-6.66" cy="7.66" r="0.85" fill="#1e0e00" opacity="0.52"/></g></g></pattern>
<rect x="539.5" y="158.75" width="432.0" height="18.00" fill="url(#ta7)"/>
<pattern id="tb8" x="530" y="167" width="18" height="20" patternUnits="userSpaceOnUse"><g transform="translate(9.5,9.78)"><g filter="url(#tb2)"><ellipse cx="-25.67" cy="1.2" rx="2.9" ry="5.6" fill="#552c00" opacity="0.54" transform="rotate(-14 -25.67 1.2)"/><ellipse cx="-7.67" cy="1.2" rx="2.9" ry="5.6" fill="#552c00" opacity="0.54" transform="rotate(-14 -7.67 1.2)"/><ellipse cx="10.33" cy="1.2" rx="2.9" ry="5.6" fill="#552c00" opacity="0.54" transform="rotate(-14 10.33 1.2)"/><ellipse cx="0.6" cy="11.00" rx="4.4" ry="1.9" fill="#743f00" opacity="0.49"/><ellipse cx="0.6" cy="-7.05" rx="4.4" ry="1.9" fill="#743f00" opacity="0.49"/><path d="M-4.23 5.49L-0.20 7.72L9.15 -1.31" fill="none" stroke="#f08c14" stroke-width="4.4" stroke-linecap="round" stroke-linejoin="round" opacity="0.63"/></g><g filter="url(#tb)"><path d="M-4.00 5.62L-0.20 7.72L8.62 -0.80" fill="none" stroke="#ffc07a" stroke-width="3.0" stroke-linecap="round" stroke-linejoin="round" opacity="0.59"/><path d="M-3.05 6.14L-0.20 7.72L6.41 1.33" fill="none" stroke="#fffaf0" stroke-width="1.6" stroke-linecap="round" stroke-linejoin="round" opacity="0.59"/></g></g></pattern>
<rect x="539.5" y="167.78" width="432.0" height="18.00" fill="url(#tb8)"/>
<pattern id="ta8" x="539" y="176" width="18" height="20" patternUnits="userSpaceOnUse"><g transform="translate(9.5,9.80)"><g filter="url(#tb2)"><ellipse cx="0" cy="-6.17" rx="3.4" ry="1.6" fill="#743f00" opacity="0.45"/><path d="M-5.66 3.54Q0 9.05 5.66 3.54" fill="none" stroke="#ff9c20" stroke-width="3.3" stroke-linecap="round" opacity="0.66"/></g><g filter="url(#tb)"><circle cx="-4.81" cy="6.08" r="0.95" fill="#ffe6c0" opacity="0.58"/><circle cx="4.53" cy="5.66" r="0.95" fill="#ffe6c0" opacity="0.58"/><circle cx="-6.57" cy="7.57" r="0.85" fill="#1e0e00" opacity="0.58"/></g></g></pattern>
<rect x="539.5" y="176.80" width="432.0" height="18.00" fill="url(#ta8)"/>
<pattern id="tb9" x="530" y="185" width="18" height="20" patternUnits="userSpaceOnUse"><g transform="translate(9.5,9.83)"><g filter="url(#tb2)"><ellipse cx="-25.58" cy="1.2" rx="2.9" ry="5.6" fill="#552c00" opacity="0.59" transform="rotate(-14 -25.58 1.2)"/><ellipse cx="-7.58" cy="1.2" rx="2.9" ry="5.6" fill="#552c00" opacity="0.59" transform="rotate(-14 -7.58 1.2)"/><ellipse cx="10.42" cy="1.2" rx="2.9" ry="5.6" fill="#552c00" opacity="0.59" transform="rotate(-14 10.42 1.2)"/><ellipse cx="0.6" cy="11.00" rx="4.4" ry="1.9" fill="#743f00" opacity="0.53"/><ellipse cx="0.6" cy="-7.05" rx="4.4" ry="1.9" fill="#743f00" opacity="0.53"/><path d="M-4.23 5.40L-0.20 7.63L9.05 -1.31" fill="none" stroke="#f08c14" stroke-width="4.4" stroke-linecap="round" stroke-linejoin="round" opacity="0.69"/></g><g filter="url(#tb)"><path d="M-4.00 5.53L-0.20 7.63L8.53 -0.80" fill="none" stroke="#ffc07a" stroke-width="3.0" stroke-linecap="round" stroke-linejoin="round" opacity="0.66"/><path d="M-3.05 6.05L-0.20 7.63L6.34 1.31" fill="none" stroke="#fffaf0" stroke-width="1.6" stroke-linecap="round" stroke-linejoin="round" opacity="0.66"/></g></g></pattern>
<rect x="539.5" y="185.83" width="432.0" height="18.00" fill="url(#tb9)"/>
<pattern id="ta9" x="539" y="194" width="18" height="20" patternUnits="userSpaceOnUse"><g transform="translate(9.5,9.85)"><g filter="url(#tb2)"><ellipse cx="0" cy="-6.07" rx="3.4" ry="1.6" fill="#743f00" opacity="0.49"/><path d="M-5.58 3.49Q0 8.92 5.58 3.49" fill="none" stroke="#ff9c20" stroke-width="3.3" stroke-linecap="round" opacity="0.71"/></g><g filter="url(#tb)"><circle cx="-4.74" cy="6.00" r="0.95" fill="#ffe6c0" opacity="0.63"/><circle cx="4.46" cy="5.58" r="0.95" fill="#ffe6c0" opacity="0.63"/><circle cx="-6.47" cy="7.47" r="0.85" fill="#1e0e00" opacity="0.63"/></g></g></pattern>
<rect x="539.5" y="194.85" width="432.0" height="18.00" fill="url(#ta9)"/>
<pattern id="tb10" x="530" y="203" width="18" height="20" patternUnits="userSpaceOnUse"><g transform="translate(9.5,9.88)"><g filter="url(#tb2)"><ellipse cx="-25.45" cy="1.2" rx="2.9" ry="5.6" fill="#552c00" opacity="0.63" transform="rotate(-14 -25.45 1.2)"/><ellipse cx="-7.45" cy="1.2" rx="2.9" ry="5.6" fill="#552c00" opacity="0.63" transform="rotate(-14 -7.45 1.2)"/><ellipse cx="10.55" cy="1.2" rx="2.9" ry="5.6" fill="#552c00" opacity="0.63" transform="rotate(-14 10.55 1.2)"/><ellipse cx="0.6" cy="11.00" rx="4.4" ry="1.9" fill="#743f00" opacity="0.57"/><ellipse cx="0.6" cy="-7.05" rx="4.4" ry="1.9" fill="#743f00" opacity="0.57"/><path d="M-4.23 5.28L-0.20 7.50L8.92 -1.30" fill="none" stroke="#f08c14" stroke-width="4.4" stroke-linecap="round" stroke-linejoin="round" opacity="0.73"/></g><g filter="url(#tb)"><path d="M-4.00 5.40L-0.20 7.50L8.40 -0.80" fill="none" stroke="#ffc07a" stroke-width="3.0" stroke-linecap="round" stroke-linejoin="round" opacity="0.72"/><path d="M-3.05 5.93L-0.20 7.50L6.25 1.28" fill="none" stroke="#fffaf0" stroke-width="1.6" stroke-linecap="round" stroke-linejoin="round" opacity="0.72"/></g></g></pattern>
<rect x="539.5" y="203.88" width="432.0" height="18.00" fill="url(#tb10)"/>
<pattern id="ta10" x="539" y="212" width="18" height="20" patternUnits="userSpaceOnUse"><g transform="translate(9.5,9.90)"><g filter="url(#tb2)"><ellipse cx="0" cy="-5.94" rx="3.4" ry="1.6" fill="#743f00" opacity="0.52"/><path d="M-5.47 3.42Q0 8.75 5.47 3.42" fill="none" stroke="#ff9c20" stroke-width="3.3" stroke-linecap="round" opacity="0.75"/></g><g filter="url(#tb)"><circle cx="-4.65" cy="5.88" r="0.95" fill="#ffe6c0" opacity="0.68"/><circle cx="4.37" cy="5.47" r="0.95" fill="#ffe6c0" opacity="0.68"/><circle cx="-6.34" cy="7.34" r="0.85" fill="#1e0e00" opacity="0.68"/></g></g></pattern>
<rect x="539.5" y="212.90" width="432.0" height="18.00" fill="url(#ta10)"/>
<pattern id="tb11" x="530" y="221" width="18" height="20" patternUnits="userSpaceOnUse"><g transform="translate(9.5,9.93)"><g filter="url(#tb2)"><ellipse cx="-25.32" cy="1.2" rx="2.9" ry="5.6" fill="#552c00" opacity="0.68" transform="rotate(-14 -25.32 1.2)"/><ellipse cx="-7.32" cy="1.2" rx="2.9" ry="5.6" fill="#552c00" opacity="0.68" transform="rotate(-14 -7.32 1.2)"/><ellipse cx="10.68" cy="1.2" rx="2.9" ry="5.6" fill="#552c00" opacity="0.68" transform="rotate(-14 10.68 1.2)"/><ellipse cx="0.6" cy="10.87" rx="4.4" ry="1.9" fill="#743f00" opacity="0.61"/><ellipse cx="0.6" cy="-7.18" rx="4.4" ry="1.9" fill="#743f00" opacity="0.61"/><path d="M-4.23 5.14L-0.20 7.37L8.78 -1.29" fill="none" stroke="#f08c14" stroke-width="4.4" stroke-linecap="round" stroke-linejoin="round" opacity="0.78"/></g><g filter="url(#tb)"><path d="M-4.00 5.27L-0.20 7.37L8.27 -0.80" fill="none" stroke="#ffc07a" stroke-width="3.0" stroke-linecap="round" stroke-linejoin="round" opacity="0.79"/><path d="M-3.05 5.79L-0.20 7.37L6.15 1.24" fill="none" stroke="#fffaf0" stroke-width="1.6" stroke-linecap="round" stroke-linejoin="round" opacity="0.79"/></g></g></pattern>
<rect x="539.5" y="221.93" width="432.0" height="18.00" fill="url(#tb11)"/>
<pattern id="ta11" x="539" y="230" width="18" height="20" patternUnits="userSpaceOnUse"><g transform="translate(9.5,9.95)"><g filter="url(#tb2)"><ellipse cx="0" cy="-5.80" rx="3.4" ry="1.6" fill="#743f00" opacity="0.56"/><path d="M-5.36 3.35Q0 8.58 5.36 3.35" fill="none" stroke="#ff9c20" stroke-width="3.3" stroke-linecap="round" opacity="0.80"/></g><g filter="url(#tb)"><circle cx="-4.56" cy="5.76" r="0.95" fill="#ffe6c0" opacity="0.74"/><circle cx="4.29" cy="5.36" r="0.95" fill="#ffe6c0" opacity="0.74"/><circle cx="-6.20" cy="7.20" r="0.85" fill="#1e0e00" opacity="0.74"/></g></g></pattern>
<rect x="539.5" y="230.95" width="432.0" height="18.00" fill="url(#ta11)"/>
<pattern id="tb12" x="530" y="239" width="18" height="20" patternUnits="userSpaceOnUse"><g transform="translate(9.5,9.98)"><g filter="url(#tb2)"><ellipse cx="-25.18" cy="1.2" rx="2.9" ry="5.6" fill="#552c00" opacity="0.72" transform="rotate(-14 -25.18 1.2)"/><ellipse cx="-7.18" cy="1.2" rx="2.9" ry="5.6" fill="#552c00" opacity="0.72" transform="rotate(-14 -7.18 1.2)"/><ellipse cx="10.82" cy="1.2" rx="2.9" ry="5.6" fill="#552c00" opacity="0.72" transform="rotate(-14 10.82 1.2)"/><ellipse cx="0.6" cy="10.73" rx="4.4" ry="1.9" fill="#743f00" opacity="0.65"/><ellipse cx="0.6" cy="-7.32" rx="4.4" ry="1.9" fill="#743f00" opacity="0.65"/><path d="M-4.23 5.01L-0.20 7.23L8.63 -1.28" fill="none" stroke="#f08c14" stroke-width="4.4" stroke-linecap="round" stroke-linejoin="round" opacity="0.82"/></g><g filter="url(#tb)"><path d="M-4.00 5.13L-0.20 7.23L8.13 -0.80" fill="none" stroke="#ffc07a" stroke-width="3.0" stroke-linecap="round" stroke-linejoin="round" opacity="0.86"/><path d="M-3.05 5.66L-0.20 7.23L6.05 1.21" fill="none" stroke="#fffaf0" stroke-width="1.6" stroke-linecap="round" stroke-linejoin="round" opacity="0.86"/></g></g></pattern>
<rect x="539.5" y="239.98" width="432.0" height="18.00" fill="url(#tb12)"/>
<pattern id="ta12" x="539" y="249" width="18" height="20" patternUnits="userSpaceOnUse"><g transform="translate(9.5,9.00)"><g filter="url(#tb2)"><ellipse cx="0" cy="-5.67" rx="3.4" ry="1.6" fill="#743f00" opacity="0.60"/><path d="M-5.25 3.28Q0 8.40 5.25 3.28" fill="none" stroke="#ff9c20" stroke-width="3.3" stroke-linecap="round" opacity="0.84"/></g><g filter="url(#tb)"><circle cx="-4.46" cy="5.65" r="0.95" fill="#ffe6c0" opacity="0.79"/><circle cx="4.20" cy="5.25" r="0.95" fill="#ffe6c0" opacity="0.79"/><circle cx="-6.06" cy="7.06" r="0.85" fill="#1e0e00" opacity="0.79"/></g></g></pattern>
<rect x="539.5" y="249.00" width="432.0" height="18.00" fill="url(#ta12)"/>
<pattern id="tb13" x="530" y="258" width="18" height="20" patternUnits="userSpaceOnUse"><g transform="translate(9.5,9.02)"><g filter="url(#tb2)"><ellipse cx="-25.05" cy="1.2" rx="2.9" ry="5.6" fill="#552c00" opacity="0.77" transform="rotate(-14 -25.05 1.2)"/><ellipse cx="-7.05" cy="1.2" rx="2.9" ry="5.6" fill="#552c00" opacity="0.77" transform="rotate(-14 -7.05 1.2)"/><ellipse cx="10.95" cy="1.2" rx="2.9" ry="5.6" fill="#552c00" opacity="0.77" transform="rotate(-14 10.95 1.2)"/><ellipse cx="0.6" cy="10.60" rx="4.4" ry="1.9" fill="#743f00" opacity="0.69"/><ellipse cx="0.6" cy="-7.45" rx="4.4" ry="1.9" fill="#743f00" opacity="0.69"/><path d="M-4.23 4.87L-0.20 7.10L8.49 -1.27" fill="none" stroke="#f08c14" stroke-width="4.4" stroke-linecap="round" stroke-linejoin="round" opacity="0.87"/></g><g filter="url(#tb)"><path d="M-4.00 5.00L-0.20 7.10L8.00 -0.80" fill="none" stroke="#ffc07a" stroke-width="3.0" stroke-linecap="round" stroke-linejoin="round" opacity="0.91"/><path d="M-3.05 5.52L-0.20 7.10L5.95 1.17" fill="none" stroke="#fffaf0" stroke-width="1.6" stroke-linecap="round" stroke-linejoin="round" opacity="0.91"/></g></g></pattern>
<rect x="539.5" y="258.02" width="432.0" height="18.00" fill="url(#tb13)"/>
<pattern id="ta13" x="539" y="267" width="18" height="20" patternUnits="userSpaceOnUse"><g transform="translate(9.5,9.05)"><g filter="url(#tb2)"><ellipse cx="0" cy="-5.53" rx="3.4" ry="1.6" fill="#743f00" opacity="0.63"/><path d="M-5.14 3.21Q0 8.23 5.14 3.21" fill="none" stroke="#ff9c20" stroke-width="3.3" stroke-linecap="round" opacity="0.89"/></g><g filter="url(#tb)"><circle cx="-4.37" cy="5.53" r="0.95" fill="#ffe6c0" opacity="0.80"/><circle cx="4.11" cy="5.14" r="0.95" fill="#ffe6c0" opacity="0.80"/><circle cx="-5.93" cy="6.93" r="0.85" fill="#1e0e00" opacity="0.80"/></g></g></pattern>
<rect x="539.5" y="267.05" width="432.0" height="18.00" fill="url(#ta13)"/>
<pattern id="tb14" x="530" y="276" width="18" height="20" patternUnits="userSpaceOnUse"><g transform="translate(9.5,9.08)"><g filter="url(#tb2)"><ellipse cx="-24.91" cy="1.2" rx="2.9" ry="5.6" fill="#552c00" opacity="0.81" transform="rotate(-14 -24.91 1.2)"/><ellipse cx="-6.91" cy="1.2" rx="2.9" ry="5.6" fill="#552c00" opacity="0.81" transform="rotate(-14 -6.91 1.2)"/><ellipse cx="11.09" cy="1.2" rx="2.9" ry="5.6" fill="#552c00" opacity="0.81" transform="rotate(-14 11.09 1.2)"/><ellipse cx="0.6" cy="10.46" rx="4.4" ry="1.9" fill="#743f00" opacity="0.73"/><ellipse cx="0.6" cy="-7.59" rx="4.4" ry="1.9" fill="#743f00" opacity="0.73"/><path d="M-4.23 4.73L-0.20 6.96L8.34 -1.27" fill="none" stroke="#f08c14" stroke-width="4.4" stroke-linecap="round" stroke-linejoin="round" opacity="0.91"/></g><g filter="url(#tb)"><path d="M-4.00 4.86L-0.20 6.96L7.86 -0.80" fill="none" stroke="#ffc07a" stroke-width="3.0" stroke-linecap="round" stroke-linejoin="round" opacity="0.92"/><path d="M-3.05 5.38L-0.20 6.96L5.84 1.14" fill="none" stroke="#fffaf0" stroke-width="1.6" stroke-linecap="round" stroke-linejoin="round" opacity="0.92"/></g></g></pattern>
<rect x="539.5" y="276.08" width="432.0" height="18.00" fill="url(#tb14)"/>
<pattern id="ta14" x="539" y="285" width="18" height="20" patternUnits="userSpaceOnUse"><g transform="translate(9.5,9.10)"><g filter="url(#tb2)"><ellipse cx="0" cy="-5.38" rx="3.4" ry="1.6" fill="#743f00" opacity="0.67"/><path d="M-5.02 3.14Q0 8.03 5.02 3.14" fill="none" stroke="#ff9c20" stroke-width="3.3" stroke-linecap="round" opacity="0.94"/></g><g filter="url(#tb)"><circle cx="-4.27" cy="5.40" r="0.95" fill="#ffe6c0" opacity="0.81"/><circle cx="4.02" cy="5.02" r="0.95" fill="#ffe6c0" opacity="0.81"/><circle cx="-5.78" cy="6.78" r="0.85" fill="#1e0e00" opacity="0.81"/></g></g></pattern>
<rect x="539.5" y="285.10" width="432.0" height="18.00" fill="url(#ta14)"/>
<pattern id="tb15" x="530" y="294" width="18" height="20" patternUnits="userSpaceOnUse"><g transform="translate(9.5,9.12)"><g filter="url(#tb2)"><ellipse cx="-24.75" cy="1.2" rx="2.9" ry="5.6" fill="#552c00" opacity="0.85" transform="rotate(-14 -24.75 1.2)"/><ellipse cx="-6.75" cy="1.2" rx="2.9" ry="5.6" fill="#552c00" opacity="0.85" transform="rotate(-14 -6.75 1.2)"/><ellipse cx="11.25" cy="1.2" rx="2.9" ry="5.6" fill="#552c00" opacity="0.85" transform="rotate(-14 11.25 1.2)"/><ellipse cx="0.6" cy="10.30" rx="4.4" ry="1.9" fill="#743f00" opacity="0.77"/><ellipse cx="0.6" cy="-7.75" rx="4.4" ry="1.9" fill="#743f00" opacity="0.77"/><path d="M-4.23 4.57L-0.20 6.80L8.17 -1.26" fill="none" stroke="#f08c14" stroke-width="4.4" stroke-linecap="round" stroke-linejoin="round" opacity="0.95"/></g><g filter="url(#tb)"><path d="M-4.00 4.70L-0.20 6.80L7.70 -0.80" fill="none" stroke="#ffc07a" stroke-width="3.0" stroke-linecap="round" stroke-linejoin="round" opacity="0.93"/><path d="M-3.05 5.22L-0.20 6.80L5.72 1.10" fill="none" stroke="#fffaf0" stroke-width="1.6" stroke-linecap="round" stroke-linejoin="round" opacity="0.93"/></g></g></pattern>
<rect x="539.5" y="294.12" width="432.0" height="18.00" fill="url(#tb15)"/>
<pattern id="ta15" x="539" y="303" width="18" height="20" patternUnits="userSpaceOnUse"><g transform="translate(9.5,9.15)"><g filter="url(#tb2)"><ellipse cx="0" cy="-5.22" rx="3.4" ry="1.6" fill="#743f00" opacity="0.69"/><path d="M-4.89 3.06Q0 7.83 4.89 3.06" fill="none" stroke="#ff9c20" stroke-width="3.3" stroke-linecap="round" opacity="0.95"/></g><g filter="url(#tb)"><circle cx="-4.16" cy="5.26" r="0.95" fill="#ffe6c0" opacity="0.82"/><circle cx="3.92" cy="4.89" r="0.95" fill="#ffe6c0" opacity="0.82"/><circle cx="-5.62" cy="6.62" r="0.85" fill="#1e0e00" opacity="0.82"/></g></g></pattern>
<rect x="539.5" y="303.15" width="432.0" height="18.00" fill="url(#ta15)"/>
<pattern id="tb16" x="530" y="312" width="18" height="20" patternUnits="userSpaceOnUse"><g transform="translate(9.5,9.18)"><g filter="url(#tb2)"><ellipse cx="-24.59" cy="1.2" rx="2.9" ry="5.6" fill="#552c00" opacity="0.87" transform="rotate(-14 -24.59 1.2)"/><ellipse cx="-6.59" cy="1.2" rx="2.9" ry="5.6" fill="#552c00" opacity="0.87" transform="rotate(-14 -6.59 1.2)"/><ellipse cx="11.41" cy="1.2" rx="2.9" ry="5.6" fill="#552c00" opacity="0.87" transform="rotate(-14 11.41 1.2)"/><ellipse cx="0.6" cy="10.14" rx="4.4" ry="1.9" fill="#743f00" opacity="0.78"/><ellipse cx="0.6" cy="-7.91" rx="4.4" ry="1.9" fill="#743f00" opacity="0.78"/><path d="M-4.23 4.41L-0.20 6.64L8.00 -1.25" fill="none" stroke="#f08c14" stroke-width="4.4" stroke-linecap="round" stroke-linejoin="round" opacity="0.95"/></g><g filter="url(#tb)"><path d="M-4.00 4.54L-0.20 6.64L7.54 -0.80" fill="none" stroke="#ffc07a" stroke-width="3.0" stroke-linecap="round" stroke-linejoin="round" opacity="0.94"/><path d="M-3.05 5.06L-0.20 6.64L5.60 1.06" fill="none" stroke="#fffaf0" stroke-width="1.6" stroke-linecap="round" stroke-linejoin="round" opacity="0.94"/></g></g></pattern>
<rect x="539.5" y="312.18" width="432.0" height="18.00" fill="url(#tb16)"/>
<pattern id="ta16" x="539" y="321" width="18" height="20" patternUnits="userSpaceOnUse"><g transform="translate(9.5,9.20)"><g filter="url(#tb2)"><ellipse cx="0" cy="-5.06" rx="3.4" ry="1.6" fill="#743f00" opacity="0.70"/><path d="M-4.77 2.98Q0 7.63 4.77 2.98" fill="none" stroke="#ff9c20" stroke-width="3.3" stroke-linecap="round" opacity="0.96"/></g><g filter="url(#tb)"><circle cx="-4.05" cy="5.13" r="0.95" fill="#ffe6c0" opacity="0.82"/><circle cx="3.81" cy="4.77" r="0.95" fill="#ffe6c0" opacity="0.82"/><circle cx="-5.46" cy="6.46" r="0.85" fill="#1e0e00" opacity="0.82"/></g></g></pattern>
<rect x="539.5" y="321.20" width="432.0" height="18.00" fill="url(#ta16)"/>
<pattern id="tb17" x="530" y="330" width="18" height="20" patternUnits="userSpaceOnUse"><g transform="translate(9.5,9.23)"><g filter="url(#tb2)"><ellipse cx="-24.43" cy="1.2" rx="2.9" ry="5.6" fill="#552c00" opacity="0.88" transform="rotate(-14 -24.43 1.2)"/><ellipse cx="-6.43" cy="1.2" rx="2.9" ry="5.6" fill="#552c00" opacity="0.88" transform="rotate(-14 -6.43 1.2)"/><ellipse cx="11.57" cy="1.2" rx="2.9" ry="5.6" fill="#552c00" opacity="0.88" transform="rotate(-14 11.57 1.2)"/><ellipse cx="0.6" cy="9.98" rx="4.4" ry="1.9" fill="#743f00" opacity="0.79"/><ellipse cx="0.6" cy="-8.07" rx="4.4" ry="1.9" fill="#743f00" opacity="0.79"/><path d="M-4.23 4.26L-0.20 6.48L7.84 -1.24" fill="none" stroke="#f08c14" stroke-width="4.4" stroke-linecap="round" stroke-linejoin="round" opacity="0.96"/></g><g filter="url(#tb)"><path d="M-4.00 4.38L-0.20 6.48L7.38 -0.80" fill="none" stroke="#ffc07a" stroke-width="3.0" stroke-linecap="round" stroke-linejoin="round" opacity="0.96"/><path d="M-3.05 4.91L-0.20 6.48L5.49 1.02" fill="none" stroke="#fffaf0" stroke-width="1.6" stroke-linecap="round" stroke-linejoin="round" opacity="0.96"/></g></g></pattern>
<rect x="539.5" y="330.23" width="432.0" height="18.00" fill="url(#tb17)"/>
<pattern id="ta17" x="539" y="339" width="18" height="20" patternUnits="userSpaceOnUse"><g transform="translate(9.5,9.25)"><g filter="url(#tb2)"><ellipse cx="0" cy="-4.90" rx="3.4" ry="1.6" fill="#743f00" opacity="0.71"/><path d="M-4.64 2.90Q0 7.43 4.64 2.90" fill="none" stroke="#ff9c20" stroke-width="3.3" stroke-linecap="round" opacity="0.96"/></g><g filter="url(#tb)"><circle cx="-3.95" cy="4.99" r="0.95" fill="#ffe6c0" opacity="0.83"/><circle cx="3.71" cy="4.64" r="0.95" fill="#ffe6c0" opacity="0.83"/><circle cx="-5.30" cy="6.30" r="0.85" fill="#1e0e00" opacity="0.83"/></g></g></pattern>
<rect x="539.5" y="339.25" width="432.0" height="18.00" fill="url(#ta17)"/>
<pattern id="tb18" x="530" y="348" width="18" height="20" patternUnits="userSpaceOnUse"><g transform="translate(9.5,9.28)"><g filter="url(#tb2)"><ellipse cx="-24.27" cy="1.2" rx="2.9" ry="5.6" fill="#552c00" opacity="0.90" transform="rotate(-14 -24.27 1.2)"/><ellipse cx="-6.27" cy="1.2" rx="2.9" ry="5.6" fill="#552c00" opacity="0.90" transform="rotate(-14 -6.27 1.2)"/><ellipse cx="11.73" cy="1.2" rx="2.9" ry="5.6" fill="#552c00" opacity="0.90" transform="rotate(-14 11.73 1.2)"/><ellipse cx="0.6" cy="9.82" rx="4.4" ry="1.9" fill="#743f00" opacity="0.81"/><ellipse cx="0.6" cy="-8.23" rx="4.4" ry="1.9" fill="#743f00" opacity="0.81"/><path d="M-4.23 4.10L-0.20 6.32L7.67 -1.23" fill="none" stroke="#f08c14" stroke-width="4.4" stroke-linecap="round" stroke-linejoin="round" opacity="0.96"/></g><g filter="url(#tb)"><path d="M-4.00 4.22L-0.20 6.32L7.22 -0.80" fill="none" stroke="#ffc07a" stroke-width="3.0" stroke-linecap="round" stroke-linejoin="round" opacity="0.97"/><path d="M-3.05 4.75L-0.20 6.32L5.37 0.98" fill="none" stroke="#fffaf0" stroke-width="1.6" stroke-linecap="round" stroke-linejoin="round" opacity="0.97"/></g></g></pattern>
<rect x="539.5" y="348.28" width="432.0" height="18.00" fill="url(#tb18)"/>
<pattern id="ta18" x="539" y="357" width="18" height="20" patternUnits="userSpaceOnUse"><g transform="translate(9.5,9.30)"><g filter="url(#tb2)"><ellipse cx="0" cy="-4.74" rx="3.4" ry="1.6" fill="#743f00" opacity="0.72"/><path d="M-4.52 2.82Q0 7.23 4.52 2.82" fill="none" stroke="#ff9c20" stroke-width="3.3" stroke-linecap="round" opacity="0.96"/></g><g filter="url(#tb)"><circle cx="-3.84" cy="4.85" r="0.95" fill="#ffe6c0" opacity="0.83"/><circle cx="3.61" cy="4.52" r="0.95" fill="#ffe6c0" opacity="0.83"/><circle cx="-5.14" cy="6.14" r="0.85" fill="#1e0e00" opacity="0.83"/></g></g></pattern>
<rect x="539.5" y="357.30" width="432.0" height="18.00" fill="url(#ta18)"/>
<pattern id="tb19" x="530" y="366" width="18" height="20" patternUnits="userSpaceOnUse"><g transform="translate(9.5,9.32)"><g filter="url(#tb2)"><ellipse cx="-24.12" cy="1.2" rx="2.9" ry="5.6" fill="#552c00" opacity="0.91" transform="rotate(-14 -24.12 1.2)"/><ellipse cx="-6.12" cy="1.2" rx="2.9" ry="5.6" fill="#552c00" opacity="0.91" transform="rotate(-14 -6.12 1.2)"/><ellipse cx="11.88" cy="1.2" rx="2.9" ry="5.6" fill="#552c00" opacity="0.91" transform="rotate(-14 11.88 1.2)"/><ellipse cx="0.6" cy="9.67" rx="4.4" ry="1.9" fill="#743f00" opacity="0.82"/><ellipse cx="0.6" cy="-8.38" rx="4.4" ry="1.9" fill="#743f00" opacity="0.82"/><path d="M-4.23 3.94L-0.20 6.17L7.50 -1.22" fill="none" stroke="#f08c14" stroke-width="4.4" stroke-linecap="round" stroke-linejoin="round" opacity="0.96"/></g><g filter="url(#tb)"><path d="M-4.00 4.07L-0.20 6.17L7.07 -0.80" fill="none" stroke="#ffc07a" stroke-width="3.0" stroke-linecap="round" stroke-linejoin="round" opacity="0.98"/><path d="M-3.05 4.59L-0.20 6.17L5.25 0.94" fill="none" stroke="#fffaf0" stroke-width="1.6" stroke-linecap="round" stroke-linejoin="round" opacity="0.98"/></g></g></pattern>
<rect x="539.5" y="366.32" width="432.0" height="18.00" fill="url(#tb19)"/>
<pattern id="ta19" x="539" y="375" width="18" height="20" patternUnits="userSpaceOnUse"><g transform="translate(9.5,9.35)"><g filter="url(#tb2)"><ellipse cx="0" cy="-4.59" rx="3.4" ry="1.6" fill="#743f00" opacity="0.74"/><path d="M-4.39 2.74Q0 7.02 4.39 2.74" fill="none" stroke="#ff9c20" stroke-width="3.3" stroke-linecap="round" opacity="0.96"/></g><g filter="url(#tb)"><circle cx="-3.73" cy="4.72" r="0.95" fill="#ffe6c0" opacity="0.84"/><circle cx="3.51" cy="4.39" r="0.95" fill="#ffe6c0" opacity="0.84"/><circle cx="-4.99" cy="5.99" r="0.85" fill="#1e0e00" opacity="0.84"/></g></g></pattern>
<rect x="539.5" y="375.35" width="432.0" height="18.00" fill="url(#ta19)"/>
<pattern id="tb20" x="530" y="384" width="18" height="20" patternUnits="userSpaceOnUse"><g transform="translate(9.5,9.38)"><g filter="url(#tb2)"><ellipse cx="-23.96" cy="1.2" rx="2.9" ry="5.6" fill="#552c00" opacity="0.93" transform="rotate(-14 -23.96 1.2)"/><ellipse cx="-5.96" cy="1.2" rx="2.9" ry="5.6" fill="#552c00" opacity="0.93" transform="rotate(-14 -5.96 1.2)"/><ellipse cx="12.04" cy="1.2" rx="2.9" ry="5.6" fill="#552c00" opacity="0.93" transform="rotate(-14 12.04 1.2)"/><ellipse cx="0.6" cy="9.51" rx="4.4" ry="1.9" fill="#743f00" opacity="0.84"/><ellipse cx="0.6" cy="-8.54" rx="4.4" ry="1.9" fill="#743f00" opacity="0.84"/><path d="M-4.23 3.78L-0.20 6.01L7.33 -1.21" fill="none" stroke="#f08c14" stroke-width="4.4" stroke-linecap="round" stroke-linejoin="round" opacity="0.97"/></g><g filter="url(#tb)"><path d="M-4.00 3.91L-0.20 6.01L6.91 -0.80" fill="none" stroke="#ffc07a" stroke-width="3.0" stroke-linecap="round" stroke-linejoin="round" opacity="1.00"/><path d="M-3.05 4.43L-0.20 6.01L5.13 0.90" fill="none" stroke="#fffaf0" stroke-width="1.6" stroke-linecap="round" stroke-linejoin="round" opacity="1.00"/></g></g></pattern>
<rect x="539.5" y="384.38" width="432.0" height="18.00" fill="url(#tb20)"/>
<pattern id="ta20" x="539" y="393" width="18" height="20" patternUnits="userSpaceOnUse"><g transform="translate(9.5,9.40)"><g filter="url(#tb2)"><ellipse cx="0" cy="-4.43" rx="3.4" ry="1.6" fill="#743f00" opacity="0.75"/><path d="M-4.27 2.67Q0 6.82 4.27 2.67" fill="none" stroke="#ff9c20" stroke-width="3.3" stroke-linecap="round" opacity="0.97"/></g><g filter="url(#tb)"><circle cx="-3.63" cy="4.59" r="0.95" fill="#ffe6c0" opacity="0.84"/><circle cx="3.41" cy="4.27" r="0.95" fill="#ffe6c0" opacity="0.84"/><circle cx="-4.83" cy="5.83" r="0.85" fill="#1e0e00" opacity="0.84"/></g></g></pattern>
<rect x="539.5" y="393.40" width="432.0" height="18.00" fill="url(#ta20)"/>
<pattern id="tb21" x="530" y="402" width="18" height="20" patternUnits="userSpaceOnUse"><g transform="translate(9.5,9.43)"><g filter="url(#tb2)"><ellipse cx="-23.81" cy="1.2" rx="2.9" ry="5.6" fill="#552c00" opacity="0.94" transform="rotate(-14 -23.81 1.2)"/><ellipse cx="-5.81" cy="1.2" rx="2.9" ry="5.6" fill="#552c00" opacity="0.94" transform="rotate(-14 -5.81 1.2)"/><ellipse cx="12.19" cy="1.2" rx="2.9" ry="5.6" fill="#552c00" opacity="0.94" transform="rotate(-14 12.19 1.2)"/><ellipse cx="0.6" cy="9.36" rx="4.4" ry="1.9" fill="#743f00" opacity="0.85"/><ellipse cx="0.6" cy="-8.69" rx="4.4" ry="1.9" fill="#743f00" opacity="0.85"/><path d="M-4.23 3.64L-0.20 5.86L7.18 -1.20" fill="none" stroke="#f08c14" stroke-width="4.4" stroke-linecap="round" stroke-linejoin="round" opacity="0.97"/></g><g filter="url(#tb)"><path d="M-4.00 3.76L-0.20 5.86L6.76 -0.80" fill="none" stroke="#ffc07a" stroke-width="3.0" stroke-linecap="round" stroke-linejoin="round" opacity="1.00"/><path d="M-3.05 4.29L-0.20 5.86L5.02 0.87" fill="none" stroke="#fffaf0" stroke-width="1.6" stroke-linecap="round" stroke-linejoin="round" opacity="1.00"/></g></g></pattern>
<rect x="539.5" y="402.43" width="432.0" height="18.00" fill="url(#tb21)"/>
<pattern id="ta21" x="539" y="411" width="18" height="20" patternUnits="userSpaceOnUse"><g transform="translate(9.5,9.45)"><g filter="url(#tb2)"><ellipse cx="0" cy="-4.30" rx="3.4" ry="1.6" fill="#743f00" opacity="0.76"/><path d="M-4.16 2.60Q0 6.65 4.16 2.60" fill="none" stroke="#ff9c20" stroke-width="3.3" stroke-linecap="round" opacity="0.97"/></g><g filter="url(#tb)"><circle cx="-3.53" cy="4.47" r="0.95" fill="#ffe6c0" opacity="0.85"/><circle cx="3.33" cy="4.16" r="0.95" fill="#ffe6c0" opacity="0.85"/><circle cx="-4.70" cy="5.70" r="0.85" fill="#1e0e00" opacity="0.85"/></g></g></pattern>
<rect x="539.5" y="411.45" width="432.0" height="18.00" fill="url(#ta21)"/>
<pattern id="tb22" x="530" y="420" width="18" height="20" patternUnits="userSpaceOnUse"><g transform="translate(9.5,9.48)"><g filter="url(#tb2)"><ellipse cx="-23.68" cy="1.2" rx="2.9" ry="5.6" fill="#552c00" opacity="0.95" transform="rotate(-14 -23.68 1.2)"/><ellipse cx="-5.68" cy="1.2" rx="2.9" ry="5.6" fill="#552c00" opacity="0.95" transform="rotate(-14 -5.68 1.2)"/><ellipse cx="12.32" cy="1.2" rx="2.9" ry="5.6" fill="#552c00" opacity="0.95" transform="rotate(-14 12.32 1.2)"/><ellipse cx="0.6" cy="9.23" rx="4.4" ry="1.9" fill="#743f00" opacity="0.85"/><ellipse cx="0.6" cy="-8.82" rx="4.4" ry="1.9" fill="#743f00" opacity="0.85"/><path d="M-4.23 3.50L-0.20 5.73L7.04 -1.19" fill="none" stroke="#f08c14" stroke-width="4.4" stroke-linecap="round" stroke-linejoin="round" opacity="0.97"/></g><g filter="url(#tb)"><path d="M-4.00 3.63L-0.20 5.73L6.63 -0.80" fill="none" stroke="#ffc07a" stroke-width="3.0" stroke-linecap="round" stroke-linejoin="round" opacity="1.00"/><path d="M-3.05 4.15L-0.20 5.73L4.92 0.83" fill="none" stroke="#fffaf0" stroke-width="1.6" stroke-linecap="round" stroke-linejoin="round" opacity="1.00"/></g></g></pattern>
<rect x="539.5" y="420.48" width="432.0" height="18.00" fill="url(#tb22)"/>
<pattern id="ta22" x="539" y="429" width="18" height="20" patternUnits="userSpaceOnUse"><g transform="translate(9.5,9.50)"><g filter="url(#tb2)"><ellipse cx="0" cy="-4.16" rx="3.4" ry="1.6" fill="#743f00" opacity="0.76"/><path d="M-4.05 2.53Q0 6.48 4.05 2.53" fill="none" stroke="#ff9c20" stroke-width="3.3" stroke-linecap="round" opacity="0.97"/></g><g filter="url(#tb)"><circle cx="-3.44" cy="4.35" r="0.95" fill="#ffe6c0" opacity="0.85"/><circle cx="3.24" cy="4.05" r="0.95" fill="#ffe6c0" opacity="0.85"/><circle cx="-4.56" cy="5.56" r="0.85" fill="#1e0e00" opacity="0.85"/></g></g></pattern>
<rect x="539.5" y="429.50" width="432.0" height="18.00" fill="url(#ta22)"/>
<pattern id="tb23" x="530" y="438" width="18" height="20" patternUnits="userSpaceOnUse"><g transform="translate(9.5,9.53)"><g filter="url(#tb2)"><ellipse cx="-23.54" cy="1.2" rx="2.9" ry="5.6" fill="#552c00" opacity="0.95" transform="rotate(-14 -23.54 1.2)"/><ellipse cx="-5.54" cy="1.2" rx="2.9" ry="5.6" fill="#552c00" opacity="0.95" transform="rotate(-14 -5.54 1.2)"/><ellipse cx="12.46" cy="1.2" rx="2.9" ry="5.6" fill="#552c00" opacity="0.95" transform="rotate(-14 12.46 1.2)"/><ellipse cx="0.6" cy="9.09" rx="4.4" ry="1.9" fill="#743f00" opacity="0.85"/><ellipse cx="0.6" cy="-8.96" rx="4.4" ry="1.9" fill="#743f00" opacity="0.85"/><path d="M-4.23 3.37L-0.20 5.59L6.90 -1.18" fill="none" stroke="#f08c14" stroke-width="4.4" stroke-linecap="round" stroke-linejoin="round" opacity="0.97"/></g><g filter="url(#tb)"><path d="M-4.00 3.49L-0.20 5.59L6.49 -0.80" fill="none" stroke="#ffc07a" stroke-width="3.0" stroke-linecap="round" stroke-linejoin="round" opacity="1.00"/><path d="M-3.05 4.02L-0.20 5.59L4.82 0.80" fill="none" stroke="#fffaf0" stroke-width="1.6" stroke-linecap="round" stroke-linejoin="round" opacity="1.00"/></g></g></pattern>
<rect x="539.5" y="438.53" width="432.0" height="18.00" fill="url(#tb23)"/>
<pattern id="ta23" x="539" y="447" width="18" height="20" patternUnits="userSpaceOnUse"><g transform="translate(9.5,9.55)"><g filter="url(#tb2)"><ellipse cx="0" cy="-4.03" rx="3.4" ry="1.6" fill="#743f00" opacity="0.76"/><path d="M-3.94 2.46Q0 6.31 3.94 2.46" fill="none" stroke="#ff9c20" stroke-width="3.3" stroke-linecap="round" opacity="0.98"/></g><g filter="url(#tb)"><circle cx="-3.35" cy="4.24" r="0.95" fill="#ffe6c0" opacity="0.86"/><circle cx="3.15" cy="3.94" r="0.95" fill="#ffe6c0" opacity="0.86"/><circle cx="-4.43" cy="5.43" r="0.85" fill="#1e0e00" opacity="0.86"/></g></g></pattern>
<rect x="539.5" y="447.55" width="432.0" height="18.00" fill="url(#ta23)"/>
<pattern id="tb24" x="530" y="456" width="18" height="20" patternUnits="userSpaceOnUse"><g transform="translate(9.5,9.58)"><g filter="url(#tb2)"><ellipse cx="-23.41" cy="1.2" rx="2.9" ry="5.6" fill="#552c00" opacity="0.95" transform="rotate(-14 -23.41 1.2)"/><ellipse cx="-5.41" cy="1.2" rx="2.9" ry="5.6" fill="#552c00" opacity="0.95" transform="rotate(-14 -5.41 1.2)"/><ellipse cx="12.59" cy="1.2" rx="2.9" ry="5.6" fill="#552c00" opacity="0.95" transform="rotate(-14 12.59 1.2)"/><ellipse cx="0.6" cy="8.96" rx="4.4" ry="1.9" fill="#743f00" opacity="0.85"/><ellipse cx="0.6" cy="-9.09" rx="4.4" ry="1.9" fill="#743f00" opacity="0.85"/><path d="M-4.23 3.23L-0.20 5.46L6.75 -1.18" fill="none" stroke="#f08c14" stroke-width="4.4" stroke-linecap="round" stroke-linejoin="round" opacity="0.98"/></g><g filter="url(#tb)"><path d="M-4.00 3.36L-0.20 5.46L6.36 -0.80" fill="none" stroke="#ffc07a" stroke-width="3.0" stroke-linecap="round" stroke-linejoin="round" opacity="1.00"/><path d="M-3.05 3.88L-0.20 5.46L4.72 0.76" fill="none" stroke="#fffaf0" stroke-width="1.6" stroke-linecap="round" stroke-linejoin="round" opacity="1.00"/></g></g></pattern>
<rect x="539.5" y="456.58" width="432.0" height="18.00" fill="url(#tb24)"/>
<pattern id="ta24" x="539" y="465" width="18" height="20" patternUnits="userSpaceOnUse"><g transform="translate(9.5,9.60)"><g filter="url(#tb2)"><ellipse cx="0" cy="-3.89" rx="3.4" ry="1.6" fill="#743f00" opacity="0.76"/><path d="M-3.83 2.40Q0 6.13 3.83 2.40" fill="none" stroke="#ff9c20" stroke-width="3.3" stroke-linecap="round" opacity="0.98"/></g><g filter="url(#tb)"><circle cx="-3.26" cy="4.12" r="0.95" fill="#ffe6c0" opacity="0.86"/><circle cx="3.07" cy="3.83" r="0.95" fill="#ffe6c0" opacity="0.86"/><circle cx="-4.29" cy="5.29" r="0.85" fill="#1e0e00" opacity="0.86"/></g></g></pattern>
<rect x="539.5" y="465.60" width="432.0" height="18.00" fill="url(#ta24)"/>
<pattern id="tb25" x="530" y="474" width="18" height="20" patternUnits="userSpaceOnUse"><g transform="translate(9.5,9.62)"><g filter="url(#tb2)"><ellipse cx="-23.28" cy="1.2" rx="2.9" ry="5.6" fill="#552c00" opacity="0.95" transform="rotate(-14 -23.28 1.2)"/><ellipse cx="-5.28" cy="1.2" rx="2.9" ry="5.6" fill="#552c00" opacity="0.95" transform="rotate(-14 -5.28 1.2)"/><ellipse cx="12.72" cy="1.2" rx="2.9" ry="5.6" fill="#552c00" opacity="0.95" transform="rotate(-14 12.72 1.2)"/><ellipse cx="0.6" cy="8.83" rx="4.4" ry="1.9" fill="#743f00" opacity="0.85"/><ellipse cx="0.6" cy="-9.22" rx="4.4" ry="1.9" fill="#743f00" opacity="0.85"/><path d="M-4.23 3.10L-0.20 5.33L6.61 -1.17" fill="none" stroke="#f08c14" stroke-width="4.4" stroke-linecap="round" stroke-linejoin="round" opacity="0.98"/></g><g filter="url(#tb)"><path d="M-4.00 3.23L-0.20 5.33L6.23 -0.80" fill="none" stroke="#ffc07a" stroke-width="3.0" stroke-linecap="round" stroke-linejoin="round" opacity="1.00"/><path d="M-3.05 3.75L-0.20 5.33L4.62 0.73" fill="none" stroke="#fffaf0" stroke-width="1.6" stroke-linecap="round" stroke-linejoin="round" opacity="1.00"/></g></g></pattern>
<rect x="539.5" y="474.62" width="432.0" height="18.00" fill="url(#tb25)"/>
<pattern id="ta25" x="539" y="483" width="18" height="20" patternUnits="userSpaceOnUse"><g transform="translate(9.5,9.65)"><g filter="url(#tb2)"><ellipse cx="0" cy="-3.77" rx="3.4" ry="1.6" fill="#743f00" opacity="0.76"/><path d="M-3.74 2.34Q0 5.98 3.74 2.34" fill="none" stroke="#ff9c20" stroke-width="3.3" stroke-linecap="round" opacity="0.98"/></g><g filter="url(#tb)"><circle cx="-3.18" cy="4.02" r="0.95" fill="#ffe6c0" opacity="0.87"/><circle cx="2.99" cy="3.74" r="0.95" fill="#ffe6c0" opacity="0.87"/><circle cx="-4.17" cy="5.17" r="0.85" fill="#1e0e00" opacity="0.87"/></g></g></pattern>
<rect x="539.5" y="483.65" width="432.0" height="18.00" fill="url(#ta25)"/>
<pattern id="tb26" x="530" y="492" width="18" height="20" patternUnits="userSpaceOnUse"><g transform="translate(9.5,9.68)"><g filter="url(#tb2)"><ellipse cx="-23.16" cy="1.2" rx="2.9" ry="5.6" fill="#552c00" opacity="0.95" transform="rotate(-14 -23.16 1.2)"/><ellipse cx="-5.16" cy="1.2" rx="2.9" ry="5.6" fill="#552c00" opacity="0.95" transform="rotate(-14 -5.16 1.2)"/><ellipse cx="12.84" cy="1.2" rx="2.9" ry="5.6" fill="#552c00" opacity="0.95" transform="rotate(-14 12.84 1.2)"/><ellipse cx="0.6" cy="8.71" rx="4.4" ry="1.9" fill="#743f00" opacity="0.85"/><ellipse cx="0.6" cy="-9.34" rx="4.4" ry="1.9" fill="#743f00" opacity="0.85"/><path d="M-4.23 2.99L-0.20 5.21L6.49 -1.16" fill="none" stroke="#f08c14" stroke-width="4.4" stroke-linecap="round" stroke-linejoin="round" opacity="0.98"/></g><g filter="url(#tb)"><path d="M-4.00 3.11L-0.20 5.21L6.11 -0.80" fill="none" stroke="#ffc07a" stroke-width="3.0" stroke-linecap="round" stroke-linejoin="round" opacity="1.00"/><path d="M-3.05 3.64L-0.20 5.21L4.54 0.70" fill="none" stroke="#fffaf0" stroke-width="1.6" stroke-linecap="round" stroke-linejoin="round" opacity="1.00"/></g></g></pattern>
<rect x="539.5" y="492.68" width="432.0" height="18.00" fill="url(#tb26)"/>
<pattern id="ta26" x="539" y="501" width="18" height="20" patternUnits="userSpaceOnUse"><g transform="translate(9.5,9.70)"><g filter="url(#tb2)"><ellipse cx="0" cy="-3.66" rx="3.4" ry="1.6" fill="#743f00" opacity="0.76"/><path d="M-3.65 2.28Q0 5.83 3.65 2.28" fill="none" stroke="#ff9c20" stroke-width="3.3" stroke-linecap="round" opacity="0.99"/></g><g filter="url(#tb)"><circle cx="-3.10" cy="3.92" r="0.95" fill="#ffe6c0" opacity="0.87"/><circle cx="2.92" cy="3.65" r="0.95" fill="#ffe6c0" opacity="0.87"/><circle cx="-4.06" cy="5.06" r="0.85" fill="#1e0e00" opacity="0.87"/></g></g></pattern>
<rect x="539.5" y="501.70" width="432.0" height="18.00" fill="url(#ta26)"/>
<pattern id="tb27" x="530" y="510" width="18" height="20" patternUnits="userSpaceOnUse"><g transform="translate(9.5,9.73)"><g filter="url(#tb2)"><ellipse cx="-23.05" cy="1.2" rx="2.9" ry="5.6" fill="#552c00" opacity="0.95" transform="rotate(-14 -23.05 1.2)"/><ellipse cx="-5.05" cy="1.2" rx="2.9" ry="5.6" fill="#552c00" opacity="0.95" transform="rotate(-14 -5.05 1.2)"/><ellipse cx="12.95" cy="1.2" rx="2.9" ry="5.6" fill="#552c00" opacity="0.95" transform="rotate(-14 12.95 1.2)"/><ellipse cx="0.6" cy="8.60" rx="4.4" ry="1.9" fill="#743f00" opacity="0.85"/><ellipse cx="0.6" cy="-9.45" rx="4.4" ry="1.9" fill="#743f00" opacity="0.85"/><path d="M-4.23 2.88L-0.20 5.10L6.37 -1.15" fill="none" stroke="#f08c14" stroke-width="4.4" stroke-linecap="round" stroke-linejoin="round" opacity="0.99"/></g><g filter="url(#tb)"><path d="M-4.00 3.00L-0.20 5.10L6.00 -0.80" fill="none" stroke="#ffc07a" stroke-width="3.0" stroke-linecap="round" stroke-linejoin="round" opacity="1.00"/><path d="M-3.05 3.53L-0.20 5.10L4.45 0.68" fill="none" stroke="#fffaf0" stroke-width="1.6" stroke-linecap="round" stroke-linejoin="round" opacity="1.00"/></g></g></pattern>
<rect x="539.5" y="510.73" width="432.0" height="18.00" fill="url(#tb27)"/>
<pattern id="ta27" x="539" y="519" width="18" height="20" patternUnits="userSpaceOnUse"><g transform="translate(9.5,9.75)"><g filter="url(#tb2)"><ellipse cx="0" cy="-3.53" rx="3.4" ry="1.6" fill="#743f00" opacity="0.76"/><path d="M-3.55 2.22Q0 5.68 3.55 2.22" fill="none" stroke="#ff9c20" stroke-width="3.3" stroke-linecap="round" opacity="0.99"/></g><g filter="url(#tb)"><circle cx="-3.02" cy="3.81" r="0.95" fill="#ffe6c0" opacity="0.88"/><circle cx="2.84" cy="3.55" r="0.95" fill="#ffe6c0" opacity="0.88"/><circle cx="-3.93" cy="4.93" r="0.85" fill="#1e0e00" opacity="0.88"/></g></g></pattern>
<rect x="539.5" y="519.75" width="432.0" height="18.00" fill="url(#ta27)"/>
<pattern id="tb28" x="530" y="528" width="18" height="20" patternUnits="userSpaceOnUse"><g transform="translate(9.5,9.78)"><g filter="url(#tb2)"><ellipse cx="-22.92" cy="1.2" rx="2.9" ry="5.6" fill="#552c00" opacity="0.95" transform="rotate(-14 -22.92 1.2)"/><ellipse cx="-4.92" cy="1.2" rx="2.9" ry="5.6" fill="#552c00" opacity="0.95" transform="rotate(-14 -4.92 1.2)"/><ellipse cx="13.08" cy="1.2" rx="2.9" ry="5.6" fill="#552c00" opacity="0.95" transform="rotate(-14 13.08 1.2)"/><ellipse cx="0.6" cy="8.47" rx="4.4" ry="1.9" fill="#743f00" opacity="0.85"/><ellipse cx="0.6" cy="-9.58" rx="4.4" ry="1.9" fill="#743f00" opacity="0.85"/><path d="M-4.23 2.74L-0.20 4.97L6.23 -1.15" fill="none" stroke="#f08c14" stroke-width="4.4" stroke-linecap="round" stroke-linejoin="round" opacity="0.99"/></g><g filter="url(#tb)"><path d="M-4.00 2.87L-0.20 4.97L5.87 -0.80" fill="none" stroke="#ffc07a" stroke-width="3.0" stroke-linecap="round" stroke-linejoin="round" opacity="1.00"/><path d="M-3.05 3.39L-0.20 4.97L4.35 0.64" fill="none" stroke="#fffaf0" stroke-width="1.6" stroke-linecap="round" stroke-linejoin="round" opacity="1.00"/></g></g></pattern>
<rect x="539.5" y="528.78" width="432.0" height="18.00" fill="url(#tb28)"/>
<pattern id="ta28" x="539" y="537" width="18" height="20" patternUnits="userSpaceOnUse"><g transform="translate(9.5,9.80)"><g filter="url(#tb2)"><ellipse cx="0" cy="-3.40" rx="3.4" ry="1.6" fill="#743f00" opacity="0.76"/><path d="M-3.44 2.15Q0 5.50 3.44 2.15" fill="none" stroke="#ff9c20" stroke-width="3.3" stroke-linecap="round" opacity="0.99"/></g><g filter="url(#tb)"><circle cx="-2.92" cy="3.70" r="0.95" fill="#ffe6c0" opacity="0.88"/><circle cx="2.75" cy="3.44" r="0.95" fill="#ffe6c0" opacity="0.88"/><circle cx="-3.80" cy="4.80" r="0.85" fill="#1e0e00" opacity="0.88"/></g></g></pattern>
<rect x="539.5" y="537.80" width="432.0" height="18.00" fill="url(#ta28)"/>
<pattern id="tb29" x="530" y="546" width="18" height="20" patternUnits="userSpaceOnUse"><g transform="translate(9.5,9.83)"><g filter="url(#tb2)"><ellipse cx="-22.78" cy="1.2" rx="2.9" ry="5.6" fill="#552c00" opacity="0.95" transform="rotate(-14 -22.78 1.2)"/><ellipse cx="-4.78" cy="1.2" rx="2.9" ry="5.6" fill="#552c00" opacity="0.95" transform="rotate(-14 -4.78 1.2)"/><ellipse cx="13.22" cy="1.2" rx="2.9" ry="5.6" fill="#552c00" opacity="0.95" transform="rotate(-14 13.22 1.2)"/><ellipse cx="0.6" cy="8.33" rx="4.4" ry="1.9" fill="#743f00" opacity="0.85"/><ellipse cx="0.6" cy="-9.72" rx="4.4" ry="1.9" fill="#743f00" opacity="0.85"/><path d="M-3.84 2.82L-0.20 4.83L5.70 -0.77" fill="none" stroke="#f08c14" stroke-width="4.4" stroke-linecap="round" stroke-linejoin="round" opacity="0.99"/></g><g filter="url(#tb)"><path d="M-3.63 2.93L-0.20 4.83L5.36 -0.45" fill="none" stroke="#ffc07a" stroke-width="3.0" stroke-linecap="round" stroke-linejoin="round" opacity="1.00"/><path d="M-2.78 3.41L-0.20 4.83L3.97 0.87" fill="none" stroke="#fffaf0" stroke-width="1.6" stroke-linecap="round" stroke-linejoin="round" opacity="1.00"/></g></g></pattern>
<rect x="539.5" y="546.83" width="432.0" height="18.00" fill="url(#tb29)"/>
<pattern id="ta29" x="539" y="555" width="18" height="20" patternUnits="userSpaceOnUse"><g transform="translate(9.5,9.85)"><g filter="url(#tb2)"><ellipse cx="0" cy="-3.27" rx="3.4" ry="1.6" fill="#743f00" opacity="0.76"/><path d="M-3.34 2.08Q0 5.34 3.34 2.08" fill="none" stroke="#ff9c20" stroke-width="3.3" stroke-linecap="round" opacity="0.99"/></g><g filter="url(#tb)"><circle cx="-2.84" cy="3.59" r="0.95" fill="#ffe6c0" opacity="0.89"/><circle cx="2.67" cy="3.34" r="0.95" fill="#ffe6c0" opacity="0.89"/><circle cx="-3.67" cy="4.67" r="0.85" fill="#1e0e00" opacity="0.89"/></g></g></pattern>
<rect x="539.5" y="555.85" width="432.0" height="18.00" fill="url(#ta29)"/>
<pattern id="tb30" x="530" y="564" width="18" height="20" patternUnits="userSpaceOnUse"><g transform="translate(9.5,9.88)"><g filter="url(#tb2)"><ellipse cx="-22.66" cy="1.2" rx="2.9" ry="5.6" fill="#552c00" opacity="0.95" transform="rotate(-14 -22.66 1.2)"/><ellipse cx="-4.66" cy="1.2" rx="2.9" ry="5.6" fill="#552c00" opacity="0.95" transform="rotate(-14 -4.66 1.2)"/><ellipse cx="13.34" cy="1.2" rx="2.9" ry="5.6" fill="#552c00" opacity="0.95" transform="rotate(-14 13.34 1.2)"/><ellipse cx="0.6" cy="8.21" rx="4.4" ry="1.9" fill="#743f00" opacity="0.85"/><ellipse cx="0.6" cy="-9.84" rx="4.4" ry="1.9" fill="#743f00" opacity="0.85"/><path d="M-3.40 2.95L-0.20 4.71L5.14 -0.35" fill="none" stroke="#f08c14" stroke-width="4.4" stroke-linecap="round" stroke-linejoin="round" opacity="1.00"/></g><g filter="url(#tb)"><path d="M-3.22 3.05L-0.20 4.71L4.84 -0.07" fill="none" stroke="#ffc07a" stroke-width="3.0" stroke-linecap="round" stroke-linejoin="round" opacity="1.00"/><path d="M-2.46 3.46L-0.20 4.71L3.58 1.13" fill="none" stroke="#fffaf0" stroke-width="1.6" stroke-linecap="round" stroke-linejoin="round" opacity="1.00"/></g></g></pattern>
<rect x="539.5" y="564.88" width="432.0" height="18.00" fill="url(#tb30)"/>
<pattern id="ta30" x="539" y="573" width="18" height="20" patternUnits="userSpaceOnUse"><g transform="translate(9.5,9.90)"><g filter="url(#tb2)"><ellipse cx="0" cy="-3.16" rx="3.4" ry="1.6" fill="#743f00" opacity="0.76"/><path d="M-3.25 2.03Q0 5.19 3.25 2.03" fill="none" stroke="#ff9c20" stroke-width="3.3" stroke-linecap="round" opacity="1.00"/></g><g filter="url(#tb)"><circle cx="-2.76" cy="3.49" r="0.95" fill="#ffe6c0" opacity="0.89"/><circle cx="2.60" cy="3.25" r="0.95" fill="#ffe6c0" opacity="0.89"/><circle cx="-3.56" cy="4.56" r="0.85" fill="#1e0e00" opacity="0.89"/></g></g></pattern>
<rect x="539.5" y="573.90" width="432.0" height="18.00" fill="url(#ta30)"/>
<pattern id="tb31" x="530" y="582" width="18" height="20" patternUnits="userSpaceOnUse"><g transform="translate(9.5,9.93)"><g filter="url(#tb2)"><ellipse cx="-22.55" cy="1.2" rx="2.9" ry="5.6" fill="#552c00" opacity="0.95" transform="rotate(-14 -22.55 1.2)"/><ellipse cx="-4.55" cy="1.2" rx="2.9" ry="5.6" fill="#552c00" opacity="0.95" transform="rotate(-14 -4.55 1.2)"/><ellipse cx="13.45" cy="1.2" rx="2.9" ry="5.6" fill="#552c00" opacity="0.95" transform="rotate(-14 13.45 1.2)"/><ellipse cx="0.6" cy="8.10" rx="4.4" ry="1.9" fill="#743f00" opacity="0.85"/><ellipse cx="0.6" cy="-9.95" rx="4.4" ry="1.9" fill="#743f00" opacity="0.85"/><path d="M-2.96 3.08L-0.20 4.60L4.61 0.04" fill="none" stroke="#f08c14" stroke-width="4.4" stroke-linecap="round" stroke-linejoin="round" opacity="1.00"/></g><g filter="url(#tb)"><path d="M-2.80 3.16L-0.20 4.60L4.34 0.30" fill="none" stroke="#ffc07a" stroke-width="3.0" stroke-linecap="round" stroke-linejoin="round" opacity="1.00"/><path d="M-2.15 3.52L-0.20 4.60L3.20 1.38" fill="none" stroke="#fffaf0" stroke-width="1.6" stroke-linecap="round" stroke-linejoin="round" opacity="1.00"/></g></g></pattern>
<rect x="539.5" y="582.93" width="432.0" height="18.00" fill="url(#tb31)"/>
<pattern id="ta31" x="539" y="591" width="18" height="20" patternUnits="userSpaceOnUse"><g transform="translate(9.5,9.95)"><g filter="url(#tb2)"><ellipse cx="0" cy="-3.04" rx="3.4" ry="1.6" fill="#743f00" opacity="0.76"/><path d="M-3.15 1.97Q0 5.05 3.15 1.97" fill="none" stroke="#ff9c20" stroke-width="3.3" stroke-linecap="round" opacity="1.00"/></g><g filter="url(#tb)"><circle cx="-2.68" cy="3.39" r="0.95" fill="#ffe6c0" opacity="0.90"/><circle cx="2.52" cy="3.15" r="0.95" fill="#ffe6c0" opacity="0.90"/><circle cx="-3.44" cy="4.44" r="0.85" fill="#1e0e00" opacity="0.90"/></g></g></pattern>
<rect x="539.5" y="591.95" width="432.0" height="18.00" fill="url(#ta31)"/>
<pattern id="tb32" x="530" y="600" width="18" height="20" patternUnits="userSpaceOnUse"><g transform="translate(9.5,9.98)"><g filter="url(#tb2)"><ellipse cx="-22.45" cy="1.2" rx="2.9" ry="5.6" fill="#552c00" opacity="0.95" transform="rotate(-14 -22.45 1.2)"/><ellipse cx="-4.45" cy="1.2" rx="2.9" ry="5.6" fill="#552c00" opacity="0.95" transform="rotate(-14 -4.45 1.2)"/><ellipse cx="13.55" cy="1.2" rx="2.9" ry="5.6" fill="#552c00" opacity="0.95" transform="rotate(-14 13.55 1.2)"/><ellipse cx="0.6" cy="8.00" rx="4.4" ry="1.9" fill="#743f00" opacity="0.85"/><ellipse cx="0.6" cy="-10.05" rx="4.4" ry="1.9" fill="#743f00" opacity="0.85"/><path d="M-2.52 3.22L-0.20 4.50L4.10 0.43" fill="none" stroke="#f08c14" stroke-width="4.4" stroke-linecap="round" stroke-linejoin="round" opacity="0.97"/></g><g filter="url(#tb)"><path d="M-2.39 3.29L-0.20 4.50L3.86 0.66" fill="none" stroke="#ffc07a" stroke-width="3.0" stroke-linecap="round" stroke-linejoin="round" opacity="1.00"/><path d="M-1.84 3.59L-0.20 4.50L2.85 1.62" fill="none" stroke="#fffaf0" stroke-width="1.6" stroke-linecap="round" stroke-linejoin="round" opacity="1.00"/></g></g></pattern>
<rect x="539.5" y="600.98" width="432.0" height="18.00" fill="url(#tb32)"/>
<pattern id="ta32" x="539" y="610" width="18" height="20" patternUnits="userSpaceOnUse"><g transform="translate(9.5,9.00)"><g filter="url(#tb2)"><ellipse cx="0" cy="-2.91" rx="3.4" ry="1.6" fill="#743f00" opacity="0.76"/><path d="M-3.05 1.90Q0 4.87 3.05 1.90" fill="none" stroke="#ff9c20" stroke-width="3.3" stroke-linecap="round" opacity="0.94"/></g><g filter="url(#tb)"><circle cx="-2.59" cy="3.27" r="0.95" fill="#ffe6c0" opacity="0.84"/><circle cx="2.44" cy="3.05" r="0.95" fill="#ffe6c0" opacity="0.84"/><circle cx="-3.31" cy="4.31" r="0.85" fill="#1e0e00" opacity="0.84"/></g></g></pattern>
<rect x="539.5" y="610.00" width="432.0" height="18.00" fill="url(#ta32)"/>
<pattern id="tb33" x="530" y="619" width="18" height="20" patternUnits="userSpaceOnUse"><g transform="translate(9.5,9.02)"><g filter="url(#tb2)"><ellipse cx="-22.45" cy="1.2" rx="2.9" ry="5.6" fill="#552c00" opacity="0.95" transform="rotate(-14 -22.45 1.2)"/><ellipse cx="-4.45" cy="1.2" rx="2.9" ry="5.6" fill="#552c00" opacity="0.95" transform="rotate(-14 -4.45 1.2)"/><ellipse cx="13.55" cy="1.2" rx="2.9" ry="5.6" fill="#552c00" opacity="0.95" transform="rotate(-14 13.55 1.2)"/><ellipse cx="0.6" cy="8.00" rx="4.4" ry="1.9" fill="#743f00" opacity="0.85"/><ellipse cx="0.6" cy="-10.05" rx="4.4" ry="1.9" fill="#743f00" opacity="0.85"/><path d="M-2.08 3.46L-0.20 4.50L3.68 0.82" fill="none" stroke="#f08c14" stroke-width="4.4" stroke-linecap="round" stroke-linejoin="round" opacity="0.92"/></g><g filter="url(#tb)"><path d="M-1.97 3.52L-0.20 4.50L3.46 1.03" fill="none" stroke="#ffc07a" stroke-width="3.0" stroke-linecap="round" stroke-linejoin="round" opacity="1.00"/><path d="M-1.53 3.77L-0.20 4.50L2.55 1.90" fill="none" stroke="#fffaf0" stroke-width="1.6" stroke-linecap="round" stroke-linejoin="round" opacity="1.00"/></g></g></pattern>
<rect x="539.5" y="619.02" width="432.0" height="18.00" fill="url(#tb33)"/>
<pattern id="ta33" x="539" y="628" width="18" height="20" patternUnits="userSpaceOnUse"><g transform="translate(9.5,9.05)"><g filter="url(#tb2)"><ellipse cx="0" cy="-2.90" rx="3.4" ry="1.6" fill="#743f00" opacity="0.76"/><path d="M-3.04 1.90Q0 4.86 3.04 1.90" fill="none" stroke="#ff9c20" stroke-width="3.3" stroke-linecap="round" opacity="0.89"/></g><g filter="url(#tb)"><circle cx="-2.58" cy="3.27" r="0.95" fill="#ffe6c0" opacity="0.79"/><circle cx="2.43" cy="3.04" r="0.95" fill="#ffe6c0" opacity="0.79"/><circle cx="-3.30" cy="4.30" r="0.85" fill="#1e0e00" opacity="0.79"/></g></g></pattern>
<rect x="539.5" y="628.05" width="432.0" height="18.00" fill="url(#ta33)"/>
<pattern id="tb34" x="530" y="637" width="18" height="20" patternUnits="userSpaceOnUse"><g transform="translate(9.5,9.08)"><g filter="url(#tb2)"><ellipse cx="-22.45" cy="1.2" rx="2.9" ry="5.6" fill="#552c00" opacity="0.93" transform="rotate(-14 -22.45 1.2)"/><ellipse cx="-4.45" cy="1.2" rx="2.9" ry="5.6" fill="#552c00" opacity="0.93" transform="rotate(-14 -4.45 1.2)"/><ellipse cx="13.55" cy="1.2" rx="2.9" ry="5.6" fill="#552c00" opacity="0.93" transform="rotate(-14 13.55 1.2)"/><ellipse cx="0.6" cy="8.00" rx="4.4" ry="1.9" fill="#743f00" opacity="0.84"/><ellipse cx="0.6" cy="-10.05" rx="4.4" ry="1.9" fill="#743f00" opacity="0.84"/><path d="M-1.63 3.71L-0.20 4.50L3.26 1.22" fill="none" stroke="#f08c14" stroke-width="4.4" stroke-linecap="round" stroke-linejoin="round" opacity="0.86"/></g><g filter="url(#tb)"><path d="M-1.55 3.75L-0.20 4.50L3.07 1.41" fill="none" stroke="#ffc07a" stroke-width="3.0" stroke-linecap="round" stroke-linejoin="round" opacity="1.00"/><path d="M-1.21 3.94L-0.20 4.50L2.25 2.18" fill="none" stroke="#fffaf0" stroke-width="1.6" stroke-linecap="round" stroke-linejoin="round" opacity="1.00"/></g></g></pattern>
<rect x="539.5" y="637.08" width="432.0" height="18.00" fill="url(#tb34)"/>
<pattern id="ta34" x="539" y="646" width="18" height="20" patternUnits="userSpaceOnUse"><g transform="translate(9.5,9.10)"><g filter="url(#tb2)"><ellipse cx="0" cy="-2.90" rx="3.4" ry="1.6" fill="#743f00" opacity="0.72"/><path d="M-3.04 1.90Q0 4.86 3.04 1.90" fill="none" stroke="#ff9c20" stroke-width="3.3" stroke-linecap="round" opacity="0.83"/></g><g filter="url(#tb)"><circle cx="-2.58" cy="3.27" r="0.95" fill="#ffe6c0" opacity="0.73"/><circle cx="2.43" cy="3.04" r="0.95" fill="#ffe6c0" opacity="0.73"/><circle cx="-3.30" cy="4.30" r="0.85" fill="#1e0e00" opacity="0.73"/></g></g></pattern>
<rect x="539.5" y="646.10" width="432.0" height="18.00" fill="url(#ta34)"/>
<pattern id="tb35" x="530" y="655" width="18" height="20" patternUnits="userSpaceOnUse"><g transform="translate(9.5,9.12)"><g filter="url(#tb2)"><ellipse cx="-22.45" cy="1.2" rx="2.9" ry="5.6" fill="#552c00" opacity="0.87" transform="rotate(-14 -22.45 1.2)"/><ellipse cx="-4.45" cy="1.2" rx="2.9" ry="5.6" fill="#552c00" opacity="0.87" transform="rotate(-14 -4.45 1.2)"/><ellipse cx="13.55" cy="1.2" rx="2.9" ry="5.6" fill="#552c00" opacity="0.87" transform="rotate(-14 13.55 1.2)"/><ellipse cx="0.6" cy="8.00" rx="4.4" ry="1.9" fill="#743f00" opacity="0.79"/><ellipse cx="0.6" cy="-10.05" rx="4.4" ry="1.9" fill="#743f00" opacity="0.79"/><path d="M-1.19 3.95L-0.20 4.50L2.84 1.62" fill="none" stroke="#f08c14" stroke-width="4.4" stroke-linecap="round" stroke-linejoin="round" opacity="0.81"/></g><g filter="url(#tb)"><path d="M-1.14 3.98L-0.20 4.50L2.67 1.78" fill="none" stroke="#ffc07a" stroke-width="3.0" stroke-linecap="round" stroke-linejoin="round" opacity="1.00"/><path d="M-0.90 4.11L-0.20 4.50L1.95 2.46" fill="none" stroke="#fffaf0" stroke-width="1.6" stroke-linecap="round" stroke-linejoin="round" opacity="1.00"/></g></g></pattern>
<rect x="539.5" y="655.12" width="432.0" height="18.00" fill="url(#tb35)"/>
<pattern id="ta35" x="539" y="664" width="18" height="20" patternUnits="userSpaceOnUse"><g transform="translate(9.5,9.15)"><g filter="url(#tb2)"><ellipse cx="0" cy="-2.90" rx="3.4" ry="1.6" fill="#743f00" opacity="0.68"/><path d="M-3.04 1.90Q0 4.86 3.04 1.90" fill="none" stroke="#ff9c20" stroke-width="3.3" stroke-linecap="round" opacity="0.78"/></g><g filter="url(#tb)"><circle cx="-2.58" cy="3.27" r="0.95" fill="#ffe6c0" opacity="0.68"/><circle cx="2.43" cy="3.04" r="0.95" fill="#ffe6c0" opacity="0.68"/><circle cx="-3.30" cy="4.30" r="0.85" fill="#1e0e00" opacity="0.68"/></g></g></pattern>
<rect x="539.5" y="664.15" width="432.0" height="18.00" fill="url(#ta35)"/>
<pattern id="tb36" x="530" y="673" width="18" height="20" patternUnits="userSpaceOnUse"><g transform="translate(9.5,9.18)"><g filter="url(#tb2)"><ellipse cx="-22.45" cy="1.2" rx="2.9" ry="5.6" fill="#552c00" opacity="0.82" transform="rotate(-14 -22.45 1.2)"/><ellipse cx="-4.45" cy="1.2" rx="2.9" ry="5.6" fill="#552c00" opacity="0.82" transform="rotate(-14 -4.45 1.2)"/><ellipse cx="13.55" cy="1.2" rx="2.9" ry="5.6" fill="#552c00" opacity="0.82" transform="rotate(-14 13.55 1.2)"/><ellipse cx="0.6" cy="8.00" rx="4.4" ry="1.9" fill="#743f00" opacity="0.74"/><ellipse cx="0.6" cy="-10.05" rx="4.4" ry="1.9" fill="#743f00" opacity="0.74"/><path d="M-0.80 4.17L-0.20 4.50L2.47 1.97" fill="none" stroke="#f08c14" stroke-width="4.4" stroke-linecap="round" stroke-linejoin="round" opacity="0.75"/></g><g filter="url(#tb)"><path d="M-0.77 4.18L-0.20 4.50L2.32 2.12" fill="none" stroke="#ffc07a" stroke-width="3.0" stroke-linecap="round" stroke-linejoin="round" opacity="1.00"/><path d="M-0.63 4.26L-0.20 4.50L1.69 2.71" fill="none" stroke="#fffaf0" stroke-width="1.6" stroke-linecap="round" stroke-linejoin="round" opacity="1.00"/></g></g></pattern>
<rect x="539.5" y="673.18" width="432.0" height="18.00" fill="url(#tb36)"/>
<pattern id="ta36" x="539" y="682" width="18" height="20" patternUnits="userSpaceOnUse"><g transform="translate(9.5,9.20)"><g filter="url(#tb2)"><ellipse cx="0" cy="-2.90" rx="3.4" ry="1.6" fill="#743f00" opacity="0.63"/><path d="M-3.04 1.90Q0 4.86 3.04 1.90" fill="none" stroke="#ff9c20" stroke-width="3.3" stroke-linecap="round" opacity="0.73"/></g><g filter="url(#tb)"><circle cx="-2.58" cy="3.27" r="0.95" fill="#ffe6c0" opacity="0.63"/><circle cx="2.43" cy="3.04" r="0.95" fill="#ffe6c0" opacity="0.63"/><circle cx="-3.30" cy="4.30" r="0.85" fill="#1e0e00" opacity="0.63"/></g></g></pattern>
<rect x="539.5" y="682.20" width="432.0" height="18.00" fill="url(#ta36)"/>
<pattern id="tb37" x="530" y="691" width="18" height="20" patternUnits="userSpaceOnUse"><g transform="translate(9.5,9.23)"><g filter="url(#tb2)"><ellipse cx="-22.45" cy="1.2" rx="2.9" ry="5.6" fill="#552c00" opacity="0.76" transform="rotate(-14 -22.45 1.2)"/><ellipse cx="-4.45" cy="1.2" rx="2.9" ry="5.6" fill="#552c00" opacity="0.76" transform="rotate(-14 -4.45 1.2)"/><ellipse cx="13.55" cy="1.2" rx="2.9" ry="5.6" fill="#552c00" opacity="0.76" transform="rotate(-14 13.55 1.2)"/><ellipse cx="0.6" cy="8.00" rx="4.4" ry="1.9" fill="#743f00" opacity="0.69"/><ellipse cx="0.6" cy="-10.05" rx="4.4" ry="1.9" fill="#743f00" opacity="0.69"/><path d="M-0.80 4.17L-0.20 4.50L2.47 1.97" fill="none" stroke="#f08c14" stroke-width="4.4" stroke-linecap="round" stroke-linejoin="round" opacity="0.70"/></g><g filter="url(#tb)"><path d="M-0.77 4.18L-0.20 4.50L2.32 2.12" fill="none" stroke="#ffc07a" stroke-width="3.0" stroke-linecap="round" stroke-linejoin="round" opacity="1.00"/><path d="M-0.63 4.26L-0.20 4.50L1.69 2.71" fill="none" stroke="#fffaf0" stroke-width="1.6" stroke-linecap="round" stroke-linejoin="round" opacity="1.00"/></g></g></pattern>
<rect x="539.5" y="691.23" width="432.0" height="18.00" fill="url(#tb37)"/>
<pattern id="ta37" x="539" y="700" width="18" height="20" patternUnits="userSpaceOnUse"><g transform="translate(9.5,9.25)"><g filter="url(#tb2)"><ellipse cx="0" cy="-2.90" rx="3.4" ry="1.6" fill="#743f00" opacity="0.59"/><path d="M-3.04 1.90Q0 4.86 3.04 1.90" fill="none" stroke="#ff9c20" stroke-width="3.3" stroke-linecap="round" opacity="0.70"/></g><g filter="url(#tb)"><circle cx="-2.58" cy="3.27" r="0.95" fill="#ffe6c0" opacity="0.60"/><circle cx="2.43" cy="3.04" r="0.95" fill="#ffe6c0" opacity="0.60"/><circle cx="-3.30" cy="4.30" r="0.85" fill="#1e0e00" opacity="0.60"/></g></g></pattern>
<rect x="539.5" y="700.25" width="432.0" height="18.00" fill="url(#ta37)"/>
<pattern id="tb38" x="530" y="709" width="18" height="20" patternUnits="userSpaceOnUse"><g transform="translate(9.5,9.27)"><g filter="url(#tb2)"><ellipse cx="-22.45" cy="1.2" rx="2.9" ry="5.6" fill="#552c00" opacity="0.71" transform="rotate(-14 -22.45 1.2)"/><ellipse cx="-4.45" cy="1.2" rx="2.9" ry="5.6" fill="#552c00" opacity="0.71" transform="rotate(-14 -4.45 1.2)"/><ellipse cx="13.55" cy="1.2" rx="2.9" ry="5.6" fill="#552c00" opacity="0.71" transform="rotate(-14 13.55 1.2)"/><ellipse cx="0.6" cy="8.00" rx="4.4" ry="1.9" fill="#743f00" opacity="0.63"/><ellipse cx="0.6" cy="-10.05" rx="4.4" ry="1.9" fill="#743f00" opacity="0.63"/><path d="M-0.80 4.17L-0.20 4.50L2.47 1.97" fill="none" stroke="#f08c14" stroke-width="4.4" stroke-linecap="round" stroke-linejoin="round" opacity="0.70"/></g><g filter="url(#tb)"><path d="M-0.77 4.18L-0.20 4.50L2.32 2.12" fill="none" stroke="#ffc07a" stroke-width="3.0" stroke-linecap="round" stroke-linejoin="round" opacity="1.00"/><path d="M-0.63 4.26L-0.20 4.50L1.69 2.71" fill="none" stroke="#fffaf0" stroke-width="1.6" stroke-linecap="round" stroke-linejoin="round" opacity="1.00"/></g></g></pattern>
<rect x="539.5" y="709.27" width="432.0" height="18.00" fill="url(#tb38)"/>
<pattern id="ta38" x="539" y="718" width="18" height="20" patternUnits="userSpaceOnUse"><g transform="translate(9.5,9.30)"><g filter="url(#tb2)"><ellipse cx="0" cy="-2.90" rx="3.4" ry="1.6" fill="#743f00" opacity="0.56"/><path d="M-3.04 1.90Q0 4.86 3.04 1.90" fill="none" stroke="#ff9c20" stroke-width="3.3" stroke-linecap="round" opacity="0.70"/></g><g filter="url(#tb)"><circle cx="-2.58" cy="3.27" r="0.95" fill="#ffe6c0" opacity="0.60"/><circle cx="2.43" cy="3.04" r="0.95" fill="#ffe6c0" opacity="0.60"/><circle cx="-3.30" cy="4.30" r="0.85" fill="#1e0e00" opacity="0.60"/></g></g></pattern>
<rect x="539.5" y="718.30" width="432.0" height="18.00" fill="url(#ta38)"/>
<pattern id="tb39" x="530" y="727" width="18" height="20" patternUnits="userSpaceOnUse"><g transform="translate(9.5,9.33)"><g filter="url(#tb2)"><ellipse cx="-22.45" cy="1.2" rx="2.9" ry="5.6" fill="#552c00" opacity="0.70" transform="rotate(-14 -22.45 1.2)"/><ellipse cx="-4.45" cy="1.2" rx="2.9" ry="5.6" fill="#552c00" opacity="0.70" transform="rotate(-14 -4.45 1.2)"/><ellipse cx="13.55" cy="1.2" rx="2.9" ry="5.6" fill="#552c00" opacity="0.70" transform="rotate(-14 13.55 1.2)"/><ellipse cx="0.6" cy="8.00" rx="4.4" ry="1.9" fill="#743f00" opacity="0.63"/><ellipse cx="0.6" cy="-10.05" rx="4.4" ry="1.9" fill="#743f00" opacity="0.63"/><path d="M-0.80 4.17L-0.20 4.50L2.47 1.97" fill="none" stroke="#f08c14" stroke-width="4.4" stroke-linecap="round" stroke-linejoin="round" opacity="0.70"/></g><g filter="url(#tb)"><path d="M-0.77 4.18L-0.20 4.50L2.32 2.12" fill="none" stroke="#ffc07a" stroke-width="3.0" stroke-linecap="round" stroke-linejoin="round" opacity="1.00"/><path d="M-0.63 4.26L-0.20 4.50L1.69 2.71" fill="none" stroke="#fffaf0" stroke-width="1.6" stroke-linecap="round" stroke-linejoin="round" opacity="1.00"/></g></g></pattern>
<rect x="539.5" y="727.33" width="432.0" height="18.00" fill="url(#tb39)"/>
<pattern id="ta39" x="539" y="736" width="18" height="20" patternUnits="userSpaceOnUse"><g transform="translate(9.5,9.35)"><g filter="url(#tb2)"><ellipse cx="0" cy="-2.90" rx="3.4" ry="1.6" fill="#743f00" opacity="0.56"/><path d="M-3.04 1.90Q0 4.86 3.04 1.90" fill="none" stroke="#ff9c20" stroke-width="3.3" stroke-linecap="round" opacity="0.70"/></g><g filter="url(#tb)"><circle cx="-2.58" cy="3.27" r="0.95" fill="#ffe6c0" opacity="0.60"/><circle cx="2.43" cy="3.04" r="0.95" fill="#ffe6c0" opacity="0.60"/><circle cx="-3.30" cy="4.30" r="0.85" fill="#1e0e00" opacity="0.60"/></g></g></pattern>
<rect x="539.5" y="736.35" width="432.0" height="12.15" fill="url(#ta39)"/>
<pattern id="tb40" x="530" y="745" width="18" height="20" patternUnits="userSpaceOnUse"><g transform="translate(9.5,9.38)"><g filter="url(#tb2)"><ellipse cx="-22.45" cy="1.2" rx="2.9" ry="5.6" fill="#552c00" opacity="0.70" transform="rotate(-14 -22.45 1.2)"/><ellipse cx="-4.45" cy="1.2" rx="2.9" ry="5.6" fill="#552c00" opacity="0.70" transform="rotate(-14 -4.45 1.2)"/><ellipse cx="13.55" cy="1.2" rx="2.9" ry="5.6" fill="#552c00" opacity="0.70" transform="rotate(-14 13.55 1.2)"/><ellipse cx="0.6" cy="8.00" rx="4.4" ry="1.9" fill="#743f00" opacity="0.63"/><ellipse cx="0.6" cy="-10.05" rx="4.4" ry="1.9" fill="#743f00" opacity="0.63"/><path d="M-0.80 4.17L-0.20 4.50L2.47 1.97" fill="none" stroke="#f08c14" stroke-width="4.4" stroke-linecap="round" stroke-linejoin="round" opacity="0.70"/></g><g filter="url(#tb)"><path d="M-0.77 4.18L-0.20 4.50L2.32 2.12" fill="none" stroke="#ffc07a" stroke-width="3.0" stroke-linecap="round" stroke-linejoin="round" opacity="1.00"/><path d="M-0.63 4.26L-0.20 4.50L1.69 2.71" fill="none" stroke="#fffaf0" stroke-width="1.6" stroke-linecap="round" stroke-linejoin="round" opacity="1.00"/></g></g></pattern>
<rect x="539.5" y="745.38" width="432.0" height="3.12" fill="url(#tb40)"/>
<rect x="539.5" y="95.55" width="1.6" height="652.95" fill="#b06404" opacity="0.55"/>
<rect x="969.9" y="95.55" width="1.6" height="652.95" fill="#a05a04" opacity="0.55"/>
<rect x="540.5" y="746.7" width="430.0" height="1.8" fill="#8a4c02" opacity="0.6"/>
<g clip-path="url(#lclip)">
<g clip-path="url(#lclip2)">
<pattern id="hr0d" x="539" y="87" width="18" height="17" patternUnits="userSpaceOnUse"><rect x="-5.59" y="-5.59" width="11.19" height="11.19" rx="3.48" transform="translate(9.00,8.05) scale(1,0.94) rotate(45)" fill="#743d00"/></pattern>
<rect x="539" y="87" width="432" height="17" fill="url(#hr0d)" opacity="0.85"/>
</g>
<pattern id="hr0" x="539" y="87" width="18" height="17" patternUnits="userSpaceOnUse"><rect x="-4.94" y="-4.94" width="9.89" height="9.89" rx="3.08" transform="translate(9.50,8.55) scale(1,0.94) rotate(45)" fill="#f5f5f5"/></pattern>
<rect x="539" y="87" width="432" height="17" fill="url(#hr0)" opacity="1.00"/>
<g clip-path="url(#lclip2)">
<pattern id="hr1d" x="548" y="96" width="18" height="17" patternUnits="userSpaceOnUse"><rect x="-5.49" y="-5.49" width="10.98" height="10.98" rx="3.64" transform="translate(9.00,8.08) scale(1,0.94) rotate(45)" fill="#743d00"/></pattern>
<rect x="548" y="96" width="414" height="17" fill="url(#hr1d)" opacity="0.85"/>
</g>
<pattern id="hr1" x="548" y="96" width="18" height="17" patternUnits="userSpaceOnUse"><rect x="-4.84" y="-4.84" width="9.68" height="9.68" rx="3.21" transform="translate(9.50,8.58) scale(1,0.94) rotate(45)" fill="#f5f5f5"/></pattern>
<rect x="548" y="96" width="414" height="17" fill="url(#hr1)" opacity="1.00"/>
<circle cx="537.70" cy="104.58" r="4.84" fill="#f5f5f5"/>
<circle cx="973.30" cy="104.58" r="4.84" fill="#f5f5f5"/>
<g clip-path="url(#lclip2)">
<pattern id="hr2d" x="539" y="105" width="18" height="17" patternUnits="userSpaceOnUse"><rect x="-5.34" y="-5.34" width="10.68" height="10.68" rx="3.75" transform="translate(9.00,8.10) scale(1,0.94) rotate(45)" fill="#743d00"/></pattern>
<rect x="539" y="105" width="432" height="17" fill="url(#hr2d)" opacity="0.85"/>
</g>
<pattern id="hr2" x="539" y="105" width="18" height="17" patternUnits="userSpaceOnUse"><rect x="-4.69" y="-4.69" width="9.38" height="9.38" rx="3.30" transform="translate(9.50,8.60) scale(1,0.94) rotate(45)" fill="#f5f5f5"/></pattern>
<rect x="539" y="105" width="432" height="17" fill="url(#hr2)" opacity="1.00"/>
<g clip-path="url(#lclip2)">
<pattern id="hr3d" x="548" y="114" width="18" height="17" patternUnits="userSpaceOnUse"><rect x="-5.19" y="-5.19" width="10.39" height="10.39" rx="3.89" transform="translate(9.00,8.12) scale(1,0.94) rotate(45)" fill="#743d00"/></pattern>
<rect x="548" y="114" width="414" height="17" fill="url(#hr3d)" opacity="0.85"/>
</g>
<pattern id="hr3" x="548" y="114" width="18" height="17" patternUnits="userSpaceOnUse"><rect x="-4.54" y="-4.54" width="9.09" height="9.09" rx="3.41" transform="translate(9.50,8.62) scale(1,0.94) rotate(45)" fill="#f5f5f5"/></pattern>
<rect x="548" y="114" width="414" height="17" fill="url(#hr3)" opacity="1.00"/>
<circle cx="537.70" cy="122.62" r="4.54" fill="#f5f5f5"/>
<circle cx="973.30" cy="122.62" r="4.54" fill="#f5f5f5"/>
<g clip-path="url(#lclip2)">
<pattern id="hr4d" x="539" y="123" width="18" height="17" patternUnits="userSpaceOnUse"><rect x="-5.09" y="-5.09" width="10.19" height="10.19" rx="4.06" transform="translate(9.00,8.15) scale(1,0.94) rotate(45)" fill="#743d00"/></pattern>
<rect x="539" y="123" width="432" height="17" fill="url(#hr4d)" opacity="0.85"/>
</g>
<pattern id="hr4" x="539" y="123" width="18" height="17" patternUnits="userSpaceOnUse"><rect x="-4.44" y="-4.44" width="8.89" height="8.89" rx="3.54" transform="translate(9.50,8.65) scale(1,0.94) rotate(45)" fill="#f5f5f5"/></pattern>
<rect x="539" y="123" width="432" height="17" fill="url(#hr4)" opacity="1.00"/>
<g clip-path="url(#lclip2)">
<pattern id="hr5d" x="548" y="132" width="18" height="17" patternUnits="userSpaceOnUse"><rect x="-5.00" y="-5.00" width="10.00" height="10.00" rx="4.21" transform="translate(9.00,8.18) scale(1,0.94) rotate(45)" fill="#743d00"/></pattern>
<rect x="548" y="132" width="414" height="17" fill="url(#hr5d)" opacity="0.85"/>
</g>
<pattern id="hr5" x="548" y="132" width="18" height="17" patternUnits="userSpaceOnUse"><rect x="-4.35" y="-4.35" width="8.70" height="8.70" rx="3.66" transform="translate(9.50,8.68) scale(1,0.94) rotate(45)" fill="#f5f5f5"/></pattern>
<rect x="548" y="132" width="414" height="17" fill="url(#hr5)" opacity="1.00"/>
<circle cx="537.70" cy="140.68" r="4.35" fill="#f5f5f5"/>
<circle cx="973.30" cy="140.68" r="4.35" fill="#f5f5f5"/>
<g clip-path="url(#lclip2)">
<pattern id="hr6d" x="539" y="141" width="18" height="17" patternUnits="userSpaceOnUse"><rect x="-4.97" y="-4.97" width="9.94" height="9.94" rx="4.30" transform="translate(9.00,8.20) scale(1,0.94) rotate(45)" fill="#743d00"/></pattern>
<rect x="539" y="141" width="432" height="17" fill="url(#hr6d)" opacity="0.85"/>
</g>
<pattern id="hr6" x="539" y="141" width="18" height="17" patternUnits="userSpaceOnUse"><rect x="-4.32" y="-4.32" width="8.64" height="8.64" rx="3.74" transform="translate(9.50,8.70) scale(1,0.94) rotate(45)" fill="#f5f5f5"/></pattern>
<rect x="539" y="141" width="432" height="17" fill="url(#hr6)" opacity="1.00"/>
<g clip-path="url(#lclip2)">
<pattern id="hr7d" x="548" y="150" width="18" height="17" patternUnits="userSpaceOnUse"><rect x="-4.94" y="-4.94" width="9.88" height="9.88" rx="4.39" transform="translate(9.00,8.23) scale(1,0.94) rotate(45)" fill="#743d00"/></pattern>
<rect x="548" y="150" width="414" height="17" fill="url(#hr7d)" opacity="0.85"/>
</g>
<pattern id="hr7" x="548" y="150" width="18" height="17" patternUnits="userSpaceOnUse"><rect x="-4.29" y="-4.29" width="8.58" height="8.58" rx="3.82" transform="translate(9.50,8.73) scale(1,0.94) rotate(45)" fill="#f5f5f5"/></pattern>
<rect x="548" y="150" width="414" height="17" fill="url(#hr7)" opacity="1.00"/>
<circle cx="537.70" cy="158.73" r="4.29" fill="#f5f5f5"/>
<circle cx="973.30" cy="158.73" r="4.29" fill="#f5f5f5"/>
<g clip-path="url(#lclip2)">
<pattern id="hr8d" x="539" y="159" width="18" height="17" patternUnits="userSpaceOnUse"><rect x="-4.91" y="-4.91" width="9.82" height="9.82" rx="4.49" transform="translate(9.00,8.25) scale(1,0.94) rotate(45)" fill="#743d00"/></pattern>
<rect x="539" y="159" width="432" height="17" fill="url(#hr8d)" opacity="0.85"/>
</g>
<pattern id="hr8" x="539" y="159" width="18" height="17" patternUnits="userSpaceOnUse"><rect x="-4.26" y="-4.26" width="8.52" height="8.52" rx="3.89" transform="translate(9.50,8.75) scale(1,0.94) rotate(45)" fill="#f5f5f5"/></pattern>
<rect x="539" y="159" width="432" height="17" fill="url(#hr8)" opacity="1.00"/>
<g clip-path="url(#lclip2)">
<pattern id="hr9d" x="548" y="168" width="18" height="17" patternUnits="userSpaceOnUse"><rect x="-4.87" y="-4.87" width="9.73" height="9.73" rx="4.51" transform="translate(9.00,8.28) scale(1,0.94) rotate(45)" fill="#743d00"/></pattern>
<rect x="548" y="168" width="414" height="17" fill="url(#hr9d)" opacity="0.85"/>
</g>
<pattern id="hr9" x="548" y="168" width="18" height="17" patternUnits="userSpaceOnUse"><rect x="-4.22" y="-4.22" width="8.43" height="8.43" rx="3.91" transform="translate(9.50,8.78) scale(1,0.94) rotate(45)" fill="#f5f5f5"/></pattern>
<rect x="548" y="168" width="414" height="17" fill="url(#hr9)" opacity="1.00"/>
<circle cx="537.70" cy="176.78" r="4.22" fill="#f5f5f5"/>
<circle cx="973.30" cy="176.78" r="4.22" fill="#f5f5f5"/>
<g clip-path="url(#lclip2)">
<pattern id="hr10d" x="539" y="177" width="18" height="17" patternUnits="userSpaceOnUse"><rect x="-4.82" y="-4.82" width="9.64" height="9.64" rx="4.52" transform="translate(9.00,8.30) scale(1,0.94) rotate(45)" fill="#743d00"/></pattern>
<rect x="539" y="177" width="432" height="17" fill="url(#hr10d)" opacity="0.85"/>
</g>
<pattern id="hr10" x="539" y="177" width="18" height="17" patternUnits="userSpaceOnUse"><rect x="-4.17" y="-4.17" width="8.34" height="8.34" rx="3.91" transform="translate(9.50,8.80) scale(1,0.94) rotate(45)" fill="#f5f5f5"/></pattern>
<rect x="539" y="177" width="432" height="17" fill="url(#hr10)" opacity="1.00"/>
<g clip-path="url(#lclip2)">
<pattern id="hr11d" x="548" y="186" width="18" height="17" patternUnits="userSpaceOnUse"><rect x="-4.78" y="-4.78" width="9.55" height="9.55" rx="4.53" transform="translate(9.00,8.33) scale(1,0.94) rotate(45)" fill="#743d00"/></pattern>
<rect x="548" y="186" width="414" height="17" fill="url(#hr11d)" opacity="0.85"/>
</g>
<pattern id="hr11" x="548" y="186" width="18" height="17" patternUnits="userSpaceOnUse"><rect x="-4.13" y="-4.13" width="8.25" height="8.25" rx="3.91" transform="translate(9.50,8.83) scale(1,0.94) rotate(45)" fill="#f5f5f5"/></pattern>
<rect x="548" y="186" width="414" height="17" fill="url(#hr11)" opacity="1.00"/>
<circle cx="537.70" cy="194.83" r="4.13" fill="#f5f5f5"/>
<circle cx="973.30" cy="194.83" r="4.13" fill="#f5f5f5"/>
<g clip-path="url(#lclip2)">
<pattern id="hr12d" x="539" y="195" width="18" height="17" patternUnits="userSpaceOnUse"><rect x="-4.72" y="-4.72" width="9.44" height="9.44" rx="4.53" transform="translate(9.00,8.35) scale(1,0.94) rotate(45)" fill="#743d00"/></pattern>
<rect x="539" y="195" width="432" height="17" fill="url(#hr12d)" opacity="0.85"/>
</g>
<pattern id="hr12" x="539" y="195" width="18" height="17" patternUnits="userSpaceOnUse"><rect x="-4.07" y="-4.07" width="8.14" height="8.14" rx="3.90" transform="translate(9.50,8.85) scale(1,0.94) rotate(45)" fill="#f5f5f5"/></pattern>
<rect x="539" y="195" width="432" height="17" fill="url(#hr12)" opacity="1.00"/>
<g clip-path="url(#lclip2)">
<pattern id="hr13d" x="548" y="204" width="18" height="17" patternUnits="userSpaceOnUse"><rect x="-4.65" y="-4.65" width="9.31" height="9.31" rx="4.51" transform="translate(9.00,8.38) scale(1,0.94) rotate(45)" fill="#743d00"/></pattern>
<rect x="548" y="204" width="414" height="17" fill="url(#hr13d)" opacity="0.85"/>
</g>
<pattern id="hr13" x="548" y="204" width="18" height="17" patternUnits="userSpaceOnUse"><rect x="-4.00" y="-4.00" width="8.01" height="8.01" rx="3.88" transform="translate(9.50,8.88) scale(1,0.94) rotate(45)" fill="#f5f5f5"/></pattern>
<rect x="548" y="204" width="414" height="17" fill="url(#hr13)" opacity="1.00"/>
<circle cx="537.70" cy="212.88" r="4.00" fill="#f5f5f5"/>
<circle cx="973.30" cy="212.88" r="4.00" fill="#f5f5f5"/>
<g clip-path="url(#lclip2)">
<pattern id="hr14d" x="539" y="213" width="18" height="17" patternUnits="userSpaceOnUse"><rect x="-4.59" y="-4.59" width="9.17" height="9.17" rx="4.49" transform="translate(9.00,8.40) scale(1,0.94) rotate(45)" fill="#743d00"/></pattern>
<rect x="539" y="213" width="432" height="17" fill="url(#hr14d)" opacity="0.85"/>
</g>
<pattern id="hr14" x="539" y="213" width="18" height="17" patternUnits="userSpaceOnUse"><rect x="-3.94" y="-3.94" width="7.87" height="7.87" rx="3.85" transform="translate(9.50,8.90) scale(1,0.94) rotate(45)" fill="#f5f5f5"/></pattern>
<rect x="539" y="213" width="432" height="17" fill="url(#hr14)" opacity="1.00"/>
<g clip-path="url(#lclip2)">
<pattern id="hr15d" x="548" y="222" width="18" height="17" patternUnits="userSpaceOnUse"><rect x="-4.52" y="-4.52" width="9.04" height="9.04" rx="4.47" transform="translate(9.00,8.43) scale(1,0.94) rotate(45)" fill="#743d00"/></pattern>
<rect x="548" y="222" width="414" height="17" fill="url(#hr15d)" opacity="0.85"/>
</g>
<pattern id="hr15" x="548" y="222" width="18" height="17" patternUnits="userSpaceOnUse"><rect x="-3.87" y="-3.87" width="7.74" height="7.74" rx="3.83" transform="translate(9.50,8.93) scale(1,0.94) rotate(45)" fill="#f5f5f5"/></pattern>
<rect x="548" y="222" width="414" height="17" fill="url(#hr15)" opacity="1.00"/>
<circle cx="537.70" cy="230.93" r="3.87" fill="#f5f5f5"/>
<circle cx="973.30" cy="230.93" r="3.87" fill="#f5f5f5"/>
<g clip-path="url(#lclip2)">
<path d="M548.00 239.45h414.10" stroke="#743d00" stroke-width="8.90" stroke-dasharray="0 18.0" stroke-linecap="round" fill="none" opacity="0.85"/>
</g>
<path d="M548.50 239.95h414.10" stroke="#f5f5f5" stroke-width="7.60" stroke-dasharray="0 18.0" stroke-linecap="round" fill="none" opacity="1.00"/>
<g clip-path="url(#lclip2)">
<path d="M557.00 248.48h396.10" stroke="#743d00" stroke-width="8.77" stroke-dasharray="0 18.0" stroke-linecap="round" fill="none" opacity="0.85"/>
</g>
<path d="M557.50 248.98h396.10" stroke="#f5f5f5" stroke-width="7.47" stroke-dasharray="0 18.0" stroke-linecap="round" fill="none" opacity="1.00"/>
<circle cx="537.70" cy="248.98" r="3.73" fill="#f5f5f5"/>
<circle cx="973.30" cy="248.98" r="3.73" fill="#f5f5f5"/>
<g clip-path="url(#lclip2)">
<path d="M548.00 257.50h414.10" stroke="#743d00" stroke-width="8.63" stroke-dasharray="0 18.0" stroke-linecap="round" fill="none" opacity="0.85"/>
</g>
<path d="M548.50 258.00h414.10" stroke="#f5f5f5" stroke-width="7.33" stroke-dasharray="0 18.0" stroke-linecap="round" fill="none" opacity="1.00"/>
<g clip-path="url(#lclip2)">
<path d="M557.00 266.52h396.10" stroke="#743d00" stroke-width="8.49" stroke-dasharray="0 18.0" stroke-linecap="round" fill="none" opacity="0.85"/>
</g>
<path d="M557.50 267.02h396.10" stroke="#f5f5f5" stroke-width="7.19" stroke-dasharray="0 18.0" stroke-linecap="round" fill="none" opacity="1.00"/>
<circle cx="537.70" cy="267.02" r="3.60" fill="#f5f5f5"/>
<circle cx="973.30" cy="267.02" r="3.60" fill="#f5f5f5"/>
<g clip-path="url(#lclip2)">
<path d="M548.00 275.55h414.10" stroke="#743d00" stroke-width="8.36" stroke-dasharray="0 18.0" stroke-linecap="round" fill="none" opacity="0.85"/>
</g>
<path d="M548.50 276.05h414.10" stroke="#f5f5f5" stroke-width="7.06" stroke-dasharray="0 18.0" stroke-linecap="round" fill="none" opacity="1.00"/>
<g clip-path="url(#lclip2)">
<path d="M557.00 284.58h396.10" stroke="#743d00" stroke-width="8.21" stroke-dasharray="0 18.0" stroke-linecap="round" fill="none" opacity="0.85"/>
</g>
<path d="M557.50 285.08h396.10" stroke="#f5f5f5" stroke-width="6.91" stroke-dasharray="0 18.0" stroke-linecap="round" fill="none" opacity="1.00"/>
<circle cx="537.70" cy="285.08" r="3.46" fill="#f5f5f5"/>
<circle cx="973.30" cy="285.08" r="3.46" fill="#f5f5f5"/>
<g clip-path="url(#lclip2)">
<path d="M548.00 293.60h414.10" stroke="#743d00" stroke-width="8.05" stroke-dasharray="0 18.0" stroke-linecap="round" fill="none" opacity="0.85"/>
</g>
<path d="M548.50 294.10h414.10" stroke="#f5f5f5" stroke-width="6.75" stroke-dasharray="0 18.0" stroke-linecap="round" fill="none" opacity="1.00"/>
<g clip-path="url(#lclip2)">
<path d="M557.00 302.62h396.10" stroke="#743d00" stroke-width="7.90" stroke-dasharray="0 18.0" stroke-linecap="round" fill="none" opacity="0.85"/>
</g>
<path d="M557.50 303.12h396.10" stroke="#f5f5f5" stroke-width="6.60" stroke-dasharray="0 18.0" stroke-linecap="round" fill="none" opacity="1.00"/>
<circle cx="537.70" cy="303.12" r="3.30" fill="#f5f5f5"/>
<circle cx="973.30" cy="303.12" r="3.30" fill="#f5f5f5"/>
<g clip-path="url(#lclip2)">
<path d="M548.00 311.65h414.10" stroke="#743d00" stroke-width="7.74" stroke-dasharray="0 18.0" stroke-linecap="round" fill="none" opacity="0.85"/>
</g>
<path d="M548.50 312.15h414.10" stroke="#f5f5f5" stroke-width="6.44" stroke-dasharray="0 18.0" stroke-linecap="round" fill="none" opacity="1.00"/>
<g clip-path="url(#lclip2)">
<path d="M557.00 320.68h396.10" stroke="#743d00" stroke-width="7.58" stroke-dasharray="0 18.0" stroke-linecap="round" fill="none" opacity="0.85"/>
</g>
<path d="M557.50 321.18h396.10" stroke="#f5f5f5" stroke-width="6.28" stroke-dasharray="0 18.0" stroke-linecap="round" fill="none" opacity="1.00"/>
<circle cx="537.70" cy="321.18" r="3.14" fill="#f5f5f5"/>
<circle cx="973.30" cy="321.18" r="3.14" fill="#f5f5f5"/>
<g clip-path="url(#lclip2)">
<path d="M548.00 329.70h414.10" stroke="#743d00" stroke-width="7.42" stroke-dasharray="0 18.0" stroke-linecap="round" fill="none" opacity="0.85"/>
</g>
<path d="M548.50 330.20h414.10" stroke="#f5f5f5" stroke-width="6.12" stroke-dasharray="0 18.0" stroke-linecap="round" fill="none" opacity="1.00"/>
<g clip-path="url(#lclip2)">
<path d="M557.00 338.73h396.10" stroke="#743d00" stroke-width="7.26" stroke-dasharray="0 18.0" stroke-linecap="round" fill="none" opacity="0.85"/>
</g>
<path d="M557.50 339.23h396.10" stroke="#f5f5f5" stroke-width="5.96" stroke-dasharray="0 18.0" stroke-linecap="round" fill="none" opacity="1.00"/>
<circle cx="537.70" cy="339.23" r="2.98" fill="#f5f5f5"/>
<circle cx="973.30" cy="339.23" r="2.98" fill="#f5f5f5"/>
<g clip-path="url(#lclip2)">
<path d="M548.00 347.75h414.10" stroke="#743d00" stroke-width="7.11" stroke-dasharray="0 18.0" stroke-linecap="round" fill="none" opacity="0.85"/>
</g>
<path d="M548.50 348.25h414.10" stroke="#f5f5f5" stroke-width="5.81" stroke-dasharray="0 18.0" stroke-linecap="round" fill="none" opacity="1.00"/>
<g clip-path="url(#lclip2)">
<path d="M557.00 356.78h396.10" stroke="#743d00" stroke-width="6.95" stroke-dasharray="0 18.0" stroke-linecap="round" fill="none" opacity="0.85"/>
</g>
<path d="M557.50 357.28h396.10" stroke="#f5f5f5" stroke-width="5.65" stroke-dasharray="0 18.0" stroke-linecap="round" fill="none" opacity="1.00"/>
<circle cx="537.70" cy="357.28" r="2.82" fill="#f5f5f5"/>
<circle cx="973.30" cy="357.28" r="2.82" fill="#f5f5f5"/>
<g clip-path="url(#lclip2)">
<path d="M548.00 365.80h414.10" stroke="#743d00" stroke-width="6.79" stroke-dasharray="0 18.0" stroke-linecap="round" fill="none" opacity="0.85"/>
</g>
<path d="M548.50 366.30h414.10" stroke="#f5f5f5" stroke-width="5.49" stroke-dasharray="0 18.0" stroke-linecap="round" fill="none" opacity="1.00"/>
<g clip-path="url(#lclip2)">
<path d="M557.00 374.82h396.10" stroke="#743d00" stroke-width="6.63" stroke-dasharray="0 18.0" stroke-linecap="round" fill="none" opacity="0.85"/>
</g>
<path d="M557.50 375.32h396.10" stroke="#f5f5f5" stroke-width="5.33" stroke-dasharray="0 18.0" stroke-linecap="round" fill="none" opacity="1.00"/>
<circle cx="537.70" cy="375.32" r="2.67" fill="#f5f5f5"/>
<circle cx="973.30" cy="375.32" r="2.67" fill="#f5f5f5"/>
<g clip-path="url(#lclip2)">
<path d="M548.00 383.85h414.10" stroke="#743d00" stroke-width="6.47" stroke-dasharray="0 18.0" stroke-linecap="round" fill="none" opacity="0.85"/>
</g>
<path d="M548.50 384.35h414.10" stroke="#f5f5f5" stroke-width="5.17" stroke-dasharray="0 18.0" stroke-linecap="round" fill="none" opacity="1.00"/>
<g clip-path="url(#lclip2)">
<path d="M557.00 392.88h396.10" stroke="#743d00" stroke-width="6.32" stroke-dasharray="0 18.0" stroke-linecap="round" fill="none" opacity="0.85"/>
</g>
<path d="M557.50 393.38h396.10" stroke="#f5f5f5" stroke-width="5.02" stroke-dasharray="0 18.0" stroke-linecap="round" fill="none" opacity="1.00"/>
<circle cx="537.70" cy="393.38" r="2.51" fill="#f5f5f5"/>
<circle cx="973.30" cy="393.38" r="2.51" fill="#f5f5f5"/>
<g clip-path="url(#lclip2)">
<path d="M548.00 401.90h414.10" stroke="#743d00" stroke-width="6.16" stroke-dasharray="0 18.0" stroke-linecap="round" fill="none" opacity="0.85"/>
</g>
<path d="M548.50 402.40h414.10" stroke="#f5f5f5" stroke-width="4.86" stroke-dasharray="0 18.0" stroke-linecap="round" fill="none" opacity="1.00"/>
<g clip-path="url(#lclip2)">
<path d="M557.00 410.93h396.10" stroke="#743d00" stroke-width="6.03" stroke-dasharray="0 18.0" stroke-linecap="round" fill="none" opacity="0.85"/>
</g>
<path d="M557.50 411.43h396.10" stroke="#f5f5f5" stroke-width="4.73" stroke-dasharray="0 18.0" stroke-linecap="round" fill="none" opacity="1.00"/>
<circle cx="537.70" cy="411.43" r="2.36" fill="#f5f5f5"/>
<circle cx="973.30" cy="411.43" r="2.36" fill="#f5f5f5"/>
<g clip-path="url(#lclip2)">
<path d="M548.00 419.95h414.10" stroke="#743d00" stroke-width="5.89" stroke-dasharray="0 18.0" stroke-linecap="round" fill="none" opacity="0.85"/>
</g>
<path d="M548.50 420.45h414.10" stroke="#f5f5f5" stroke-width="4.59" stroke-dasharray="0 18.0" stroke-linecap="round" fill="none" opacity="1.00"/>
<g clip-path="url(#lclip2)">
<path d="M557.00 428.98h396.10" stroke="#743d00" stroke-width="5.76" stroke-dasharray="0 18.0" stroke-linecap="round" fill="none" opacity="0.85"/>
</g>
<path d="M557.50 429.48h396.10" stroke="#f5f5f5" stroke-width="4.46" stroke-dasharray="0 18.0" stroke-linecap="round" fill="none" opacity="1.00"/>
<circle cx="537.70" cy="429.48" r="2.23" fill="#f5f5f5"/>
<circle cx="973.30" cy="429.48" r="2.23" fill="#f5f5f5"/>
<g clip-path="url(#lclip2)">
<path d="M548.00 438.00h414.10" stroke="#743d00" stroke-width="5.62" stroke-dasharray="0 18.0" stroke-linecap="round" fill="none" opacity="0.85"/>
</g>
<path d="M548.50 438.50h414.10" stroke="#f5f5f5" stroke-width="4.32" stroke-dasharray="0 18.0" stroke-linecap="round" fill="none" opacity="1.00"/>
<g clip-path="url(#lclip2)">
<path d="M557.00 447.03h396.10" stroke="#743d00" stroke-width="5.49" stroke-dasharray="0 18.0" stroke-linecap="round" fill="none" opacity="0.85"/>
</g>
<path d="M557.50 447.53h396.10" stroke="#f5f5f5" stroke-width="4.19" stroke-dasharray="0 18.0" stroke-linecap="round" fill="none" opacity="1.00"/>
<circle cx="537.70" cy="447.53" r="2.09" fill="#f5f5f5"/>
<circle cx="973.30" cy="447.53" r="2.09" fill="#f5f5f5"/>
<g clip-path="url(#lclip2)">
<path d="M548.00 456.05h414.10" stroke="#743d00" stroke-width="5.35" stroke-dasharray="0 18.0" stroke-linecap="round" fill="none" opacity="0.85"/>
</g>
<path d="M548.50 456.55h414.10" stroke="#f5f5f5" stroke-width="4.05" stroke-dasharray="0 18.0" stroke-linecap="round" fill="none" opacity="1.00"/>
<g clip-path="url(#lclip2)">
<path d="M557.00 465.08h396.10" stroke="#743d00" stroke-width="5.22" stroke-dasharray="0 18.0" stroke-linecap="round" fill="none" opacity="0.85"/>
</g>
<path d="M557.50 465.58h396.10" stroke="#f5f5f5" stroke-width="3.92" stroke-dasharray="0 18.0" stroke-linecap="round" fill="none" opacity="1.00"/>
<circle cx="537.70" cy="465.58" r="1.96" fill="#f5f5f5"/>
<circle cx="973.30" cy="465.58" r="1.96" fill="#f5f5f5"/>
<g clip-path="url(#lclip2)">
<path d="M548.00 474.10h414.10" stroke="#743d00" stroke-width="5.08" stroke-dasharray="0 18.0" stroke-linecap="round" fill="none" opacity="0.85"/>
</g>
<path d="M548.50 474.60h414.10" stroke="#f5f5f5" stroke-width="3.78" stroke-dasharray="0 18.0" stroke-linecap="round" fill="none" opacity="1.00"/>
<g clip-path="url(#lclip2)">
<path d="M557.00 483.12h396.10" stroke="#743d00" stroke-width="4.95" stroke-dasharray="0 18.0" stroke-linecap="round" fill="none" opacity="0.85"/>
</g>
<path d="M557.50 483.62h396.10" stroke="#f5f5f5" stroke-width="3.65" stroke-dasharray="0 18.0" stroke-linecap="round" fill="none" opacity="1.00"/>
<circle cx="537.70" cy="483.62" r="1.83" fill="#f5f5f5"/>
<circle cx="973.30" cy="483.62" r="1.83" fill="#f5f5f5"/>
<g clip-path="url(#lclip2)">
<path d="M548.00 492.15h414.10" stroke="#743d00" stroke-width="4.84" stroke-dasharray="0 18.0" stroke-linecap="round" fill="none" opacity="0.85"/>
</g>
<path d="M548.50 492.65h414.10" stroke="#f5f5f5" stroke-width="3.54" stroke-dasharray="0 18.0" stroke-linecap="round" fill="none" opacity="1.00"/>
<g clip-path="url(#lclip2)">
<path d="M557.00 501.18h396.10" stroke="#743d00" stroke-width="4.73" stroke-dasharray="0 18.0" stroke-linecap="round" fill="none" opacity="0.85"/>
</g>
<path d="M557.50 501.68h396.10" stroke="#f5f5f5" stroke-width="3.43" stroke-dasharray="0 18.0" stroke-linecap="round" fill="none" opacity="1.00"/>
<circle cx="537.70" cy="501.68" r="1.71" fill="#f5f5f5"/>
<circle cx="973.30" cy="501.68" r="1.71" fill="#f5f5f5"/>
<g clip-path="url(#lclip2)">
<path d="M548.00 510.20h414.10" stroke="#743d00" stroke-width="4.62" stroke-dasharray="0 18.0" stroke-linecap="round" fill="none" opacity="0.85"/>
</g>
<path d="M548.50 510.70h414.10" stroke="#f5f5f5" stroke-width="3.32" stroke-dasharray="0 18.0" stroke-linecap="round" fill="none" opacity="1.00"/>
<g clip-path="url(#lclip2)">
<path d="M557.00 519.23h396.10" stroke="#743d00" stroke-width="4.50" stroke-dasharray="0 18.0" stroke-linecap="round" fill="none" opacity="0.85"/>
</g>
<path d="M557.50 519.73h396.10" stroke="#f5f5f5" stroke-width="3.20" stroke-dasharray="0 18.0" stroke-linecap="round" fill="none" opacity="1.00"/>
<circle cx="537.70" cy="519.73" r="1.60" fill="#f5f5f5"/>
<circle cx="973.30" cy="519.73" r="1.60" fill="#f5f5f5"/>
<g clip-path="url(#lclip2)">
<path d="M548.00 528.25h414.10" stroke="#743d00" stroke-width="4.37" stroke-dasharray="0 18.0" stroke-linecap="round" fill="none" opacity="0.85"/>
</g>
<path d="M548.50 528.75h414.10" stroke="#f5f5f5" stroke-width="3.07" stroke-dasharray="0 18.0" stroke-linecap="round" fill="none" opacity="1.00"/>
<g clip-path="url(#lclip2)">
<path d="M557.00 537.28h396.10" stroke="#743d00" stroke-width="4.23" stroke-dasharray="0 18.0" stroke-linecap="round" fill="none" opacity="0.85"/>
</g>
<path d="M557.50 537.78h396.10" stroke="#f5f5f5" stroke-width="2.93" stroke-dasharray="0 18.0" stroke-linecap="round" fill="none" opacity="1.00"/>
<g clip-path="url(#lclip2)">
<path d="M548.00 546.30h414.10" stroke="#743d00" stroke-width="4.10" stroke-dasharray="0 18.0" stroke-linecap="round" fill="none" opacity="0.85"/>
</g>
<path d="M548.50 546.80h414.10" stroke="#f5f5f5" stroke-width="2.80" stroke-dasharray="0 18.0" stroke-linecap="round" fill="none" opacity="1.00"/>
<g clip-path="url(#lclip2)">
<path d="M557.00 555.33h396.10" stroke="#743d00" stroke-width="3.96" stroke-dasharray="0 18.0" stroke-linecap="round" fill="none" opacity="0.85"/>
</g>
<path d="M557.50 555.83h396.10" stroke="#f5f5f5" stroke-width="2.66" stroke-dasharray="0 18.0" stroke-linecap="round" fill="none" opacity="1.00"/>
<g clip-path="url(#lclip2)">
<path d="M548.00 564.35h414.10" stroke="#743d00" stroke-width="3.84" stroke-dasharray="0 18.0" stroke-linecap="round" fill="none" opacity="0.85"/>
</g>
<path d="M548.50 564.85h414.10" stroke="#f5f5f5" stroke-width="2.54" stroke-dasharray="0 18.0" stroke-linecap="round" fill="none" opacity="1.00"/>
<g clip-path="url(#lclip2)">
<path d="M557.00 573.38h396.10" stroke="#743d00" stroke-width="3.73" stroke-dasharray="0 18.0" stroke-linecap="round" fill="none" opacity="0.85"/>
</g>
<path d="M557.50 573.88h396.10" stroke="#f5f5f5" stroke-width="2.43" stroke-dasharray="0 18.0" stroke-linecap="round" fill="none" opacity="1.00"/>
<g clip-path="url(#lclip2)">
<path d="M548.00 582.40h414.10" stroke="#743d00" stroke-width="3.61" stroke-dasharray="0 18.0" stroke-linecap="round" fill="none" opacity="0.80"/>
</g>
<path d="M548.50 582.90h414.10" stroke="#f5f5f5" stroke-width="2.31" stroke-dasharray="0 18.0" stroke-linecap="round" fill="none" opacity="0.95"/>
<g clip-path="url(#lclip2)">
<path d="M557.00 591.43h396.10" stroke="#743d00" stroke-width="3.50" stroke-dasharray="0 18.0" stroke-linecap="round" fill="none" opacity="0.75"/>
</g>
<path d="M557.50 591.93h396.10" stroke="#f5f5f5" stroke-width="2.20" stroke-dasharray="0 18.0" stroke-linecap="round" fill="none" opacity="0.88"/>
<g clip-path="url(#lclip2)">
<path d="M548.00 600.45h414.10" stroke="#743d00" stroke-width="3.39" stroke-dasharray="0 18.0" stroke-linecap="round" fill="none" opacity="0.69"/>
</g>
<path d="M548.50 600.95h414.10" stroke="#f5f5f5" stroke-width="2.09" stroke-dasharray="0 18.0" stroke-linecap="round" fill="none" opacity="0.81"/>
<g clip-path="url(#lclip2)">
<path d="M557.00 609.48h396.10" stroke="#743d00" stroke-width="3.25" stroke-dasharray="0 18.0" stroke-linecap="round" fill="none" opacity="0.62"/>
</g>
<path d="M557.50 609.98h396.10" stroke="#f5f5f5" stroke-width="1.95" stroke-dasharray="0 18.0" stroke-linecap="round" fill="none" opacity="0.73"/>
<g clip-path="url(#lclip2)">
<path d="M548.00 618.50h414.10" stroke="#743d00" stroke-width="3.12" stroke-dasharray="0 18.0" stroke-linecap="round" fill="none" opacity="0.56"/>
</g>
<path d="M548.50 619.00h414.10" stroke="#f5f5f5" stroke-width="1.81" stroke-dasharray="0 18.0" stroke-linecap="round" fill="none" opacity="0.66"/>
<g clip-path="url(#lclip2)">
<path d="M557.00 627.52h396.10" stroke="#743d00" stroke-width="2.98" stroke-dasharray="0 18.0" stroke-linecap="round" fill="none" opacity="0.50"/>
</g>
<path d="M557.50 628.02h396.10" stroke="#f5f5f5" stroke-width="1.68" stroke-dasharray="0 18.0" stroke-linecap="round" fill="none" opacity="0.59"/>
<g clip-path="url(#lclip2)">
<path d="M548.00 636.55h414.10" stroke="#743d00" stroke-width="2.84" stroke-dasharray="0 18.0" stroke-linecap="round" fill="none" opacity="0.44"/>
</g>
<path d="M548.50 637.05h414.10" stroke="#f5f5f5" stroke-width="1.54" stroke-dasharray="0 18.0" stroke-linecap="round" fill="none" opacity="0.52"/>
<g clip-path="url(#lclip2)">
<path d="M557.00 645.58h396.10" stroke="#743d00" stroke-width="2.68" stroke-dasharray="0 18.0" stroke-linecap="round" fill="none" opacity="0.37"/>
</g>
<path d="M557.50 646.08h396.10" stroke="#f5f5f5" stroke-width="1.38" stroke-dasharray="0 18.0" stroke-linecap="round" fill="none" opacity="0.44"/>
<path d="M548.50 655.10h414.10" stroke="#f5f5f5" stroke-width="1.20" stroke-dasharray="0 18.0" stroke-linecap="round" fill="none" opacity="0.35"/>
<path d="M557.50 664.12h396.10" stroke="#f5f5f5" stroke-width="1.02" stroke-dasharray="0 18.0" stroke-linecap="round" fill="none" opacity="0.30"/>
<path d="M548.50 673.15h414.10" stroke="#f5f5f5" stroke-width="0.79" stroke-dasharray="0 18.0" stroke-linecap="round" fill="none" opacity="0.30"/>
<path d="M557.50 682.18h396.10" stroke="#f5f5f5" stroke-width="0.46" stroke-dasharray="0 18.0" stroke-linecap="round" fill="none" opacity="0.30"/>
<path d="M548.50 691.20h414.10" stroke="#f5f5f5" stroke-width="0.14" stroke-dasharray="0 18.0" stroke-linecap="round" fill="none" opacity="0.30"/>
</g>
<filter id="rim" x="0" y="0" width="100%" height="100%" color-interpolation-filters="sRGB"><feOffset in="SourceAlpha" dx="-0.8" dy="-0.8" result="o"/><feComposite in="SourceAlpha" in2="o" operator="out" result="r1"/><feFlood flood-color="#7a4200" flood-opacity="0.85"/><feComposite in2="r1" operator="in" result="dk"/><feOffset in="SourceAlpha" dx="0.7" dy="0.7" result="o2"/><feComposite in="SourceAlpha" in2="o2" operator="out" result="r2"/><feFlood flood-color="#f3a030" flood-opacity="0.8"/><feComposite in2="r2" operator="in" result="lt"/><feMerge><feMergeNode in="SourceGraphic"/><feMergeNode in="lt"/><feMergeNode in="dk"/></feMerge></filter>
<pattern id="ltop" x="539" y="26" width="36" height="72" patternUnits="userSpaceOnUse">
<g transform="translate(-17.5,-26)"><ellipse cx="7.5" cy="30.0" rx="0.50" ry="0.50" fill="#cf7a0a"/><ellipse cx="11.5" cy="30.0" rx="0.60" ry="0.50" fill="#cf7a0a"/><ellipse cx="11.5" cy="34.0" rx="0.80" ry="0.90" fill="#cf7a0a"/><ellipse cx="24.0" cy="30.4" rx="1.30" ry="1.20" fill="#cf7a0a"/><ellipse cx="27.6" cy="30.0" rx="1.20" ry="0.60" fill="#cf7a0a"/><ellipse cx="24.0" cy="34.4" rx="0.50" ry="0.50" fill="#cf7a0a"/><ellipse cx="28.0" cy="34.4" rx="0.50" ry="0.50" fill="#cf7a0a"/><ellipse cx="3.6" cy="38.4" rx="0.90" ry="0.50" fill="#cf7a0a"/><ellipse cx="15.6" cy="38.4" rx="0.60" ry="0.50" fill="#cf7a0a"/><ellipse cx="15.6" cy="42.4" rx="0.70" ry="1.20" fill="#cf7a0a"/><ellipse cx="19.6" cy="42.0" rx="0.70" ry="0.80" fill="#cf7a0a"/><ellipse cx="4.0" cy="46.2" rx="1.50" ry="1.40" fill="#cf7a0a"/><ellipse cx="7.6" cy="49.6" rx="0.60" ry="0.50" fill="#cf7a0a"/><ellipse cx="29.2" cy="54.4" rx="0.80" ry="0.70" fill="#cf7a0a"/><ellipse cx="4.0" cy="55.2" rx="0.70" ry="1.40" fill="#cf7a0a"/><ellipse cx="32.4" cy="57.8" rx="0.60" ry="0.60" fill="#cf7a0a"/><ellipse cx="0.0" cy="57.4" rx="1.50" ry="1.10" fill="#cf7a0a"/><ellipse cx="4.6" cy="54.6" rx="1.75" ry="0.50" fill="#cf7a0a"/><ellipse cx="36.0" cy="57.4" rx="1.50" ry="1.10" fill="#cf7a0a"/><path d="M-4.0 62.2Q0.0 60.4 4.0 62.4Q0.0 64.6 -4.0 62.2Z" fill="#cf7a0a" stroke="#cf7a0a" stroke-width="0.8"/><path d="M32.0 62.2Q36.0 60.4 40.0 62.4Q36.0 64.6 32.0 62.2Z" fill="#cf7a0a" stroke="#cf7a0a" stroke-width="0.8"/><path d="M18.0 59.5L11.8 50.8" stroke="#cf7a0a" stroke-width="2.7" stroke-linecap="round" fill="none"/><path d="M18.0 59.5L24.2 50.0" stroke="#cf7a0a" stroke-width="2.7" stroke-linecap="round" fill="none"/><path d="M18.0 59.5L1.2 76.2" stroke="#cf7a0a" stroke-width="3.4" stroke-linecap="round" fill="none"/><path d="M18.0 59.5L34.8 76.2" stroke="#cf7a0a" stroke-width="3.4" stroke-linecap="round" fill="none"/><ellipse cx="18.0" cy="59.8" rx="3.00" ry="3.20" fill="#cf7a0a"/><path d="M14.4 56.0L21.6 63.4" stroke="#cf7a0a" stroke-width="3.8" stroke-linecap="round" fill="none"/><path d="M21.8 55.6L14.4 63.4" stroke="#cf7a0a" stroke-width="3.8" stroke-linecap="round" fill="none"/><path d="M25.2 69.6L31.4 63.2" stroke="#cf7a0a" stroke-width="2.2" stroke-linecap="round" fill="none"/><path d="M10.8 69.6L5.4 64.0" stroke="#cf7a0a" stroke-width="2.2" stroke-linecap="round" fill="none"/><ellipse cx="8.4" cy="66.8" rx="1.90" ry="1.90" fill="#cf7a0a"/><ellipse cx="28.2" cy="66.6" rx="1.90" ry="1.90" fill="#cf7a0a"/><path d="M15.0 74.6L14.8 81.2" stroke="#cf7a0a" stroke-width="2.9" stroke-linecap="round" fill="none"/><path d="M19.6 74.6L20.6 80.4" stroke="#cf7a0a" stroke-width="2.7" stroke-linecap="round" fill="none"/><path d="M15.0 74.3L19.6 74.3" stroke="#cf7a0a" stroke-width="2.0" stroke-linecap="round" fill="none"/><path d="M20.6 80.4L24.0 83.2" stroke="#cf7a0a" stroke-width="1.1" stroke-linecap="round" fill="none"/><path d="M1.6 80.0L7.4 86.0" stroke="#cf7a0a" stroke-width="2.9" stroke-linecap="round" fill="none"/><path d="M37.6 80.0L43.4 86.0" stroke="#cf7a0a" stroke-width="2.9" stroke-linecap="round" fill="none"/><path d="M-34.4 80.0L-28.6 86.0" stroke="#cf7a0a" stroke-width="2.9" stroke-linecap="round" fill="none"/><path d="M29.0 83.2L33.4 80.8" stroke="#cf7a0a" stroke-width="2.4" stroke-linecap="round" fill="none"/><ellipse cx="28.2" cy="86.1" rx="0.75" ry="0.75" fill="#cf7a0a"/><path d="M18.0 95.5L11.2 83.0" stroke="#cf7a0a" stroke-width="3.0" stroke-linecap="round" fill="none"/><path d="M18.0 95.5L24.0 86.0" stroke="#cf7a0a" stroke-width="3.2" stroke-linecap="round" fill="none"/><path d="M24.0 86.0L23.6 82.6" stroke="#cf7a0a" stroke-width="1.5" stroke-linecap="round" fill="none"/><ellipse cx="18.0" cy="94.6" rx="2.50" ry="2.00" fill="#cf7a0a"/><path d="M12.6 86.2L7.4 89L0.4 93.6L-4 90.6" fill="none" stroke="#cf7a0a" stroke-width="2.3" stroke-linejoin="round"/><path d="M24 87.6L27.6 89.6L35.6 93.6L40 90.4L43.4 89" fill="none" stroke="#cf7a0a" stroke-width="2.3" stroke-linejoin="round"/><ellipse cx="0.0" cy="94.0" rx="1.60" ry="1.40" fill="#cf7a0a"/><ellipse cx="36.0" cy="94.0" rx="1.60" ry="1.40" fill="#cf7a0a"/><ellipse cx="0.0" cy="98.4" rx="3.50" ry="1.60" fill="#cf7a0a"/><ellipse cx="36.0" cy="98.4" rx="3.50" ry="1.60" fill="#cf7a0a"/><path d="M18.8 61.5L32.4 75.4" stroke="#9a5604" stroke-width="0.8" stroke-linecap="round" fill="none"/><path d="M17.0 62.0L4.0 75.6" stroke="#9a5604" stroke-width="0.8" stroke-linecap="round" fill="none"/><path d="M18.6 95.5L24.8 86.6" stroke="#9a5604" stroke-width="0.8" stroke-linecap="round" fill="none"/></g>
<g transform="translate(18.5,-26)"><ellipse cx="7.5" cy="30.0" rx="0.50" ry="0.50" fill="#cf7a0a"/><ellipse cx="11.5" cy="30.0" rx="0.60" ry="0.50" fill="#cf7a0a"/><ellipse cx="11.5" cy="34.0" rx="0.80" ry="0.90" fill="#cf7a0a"/><ellipse cx="24.0" cy="30.4" rx="1.30" ry="1.20" fill="#cf7a0a"/><ellipse cx="27.6" cy="30.0" rx="1.20" ry="0.60" fill="#cf7a0a"/><ellipse cx="24.0" cy="34.4" rx="0.50" ry="0.50" fill="#cf7a0a"/><ellipse cx="28.0" cy="34.4" rx="0.50" ry="0.50" fill="#cf7a0a"/><ellipse cx="3.6" cy="38.4" rx="0.90" ry="0.50" fill="#cf7a0a"/><ellipse cx="15.6" cy="38.4" rx="0.60" ry="0.50" fill="#cf7a0a"/><ellipse cx="15.6" cy="42.4" rx="0.70" ry="1.20" fill="#cf7a0a"/><ellipse cx="19.6" cy="42.0" rx="0.70" ry="0.80" fill="#cf7a0a"/><ellipse cx="4.0" cy="46.2" rx="1.50" ry="1.40" fill="#cf7a0a"/><ellipse cx="7.6" cy="49.6" rx="0.60" ry="0.50" fill="#cf7a0a"/><ellipse cx="29.2" cy="54.4" rx="0.80" ry="0.70" fill="#cf7a0a"/><ellipse cx="4.0" cy="55.2" rx="0.70" ry="1.40" fill="#cf7a0a"/><ellipse cx="32.4" cy="57.8" rx="0.60" ry="0.60" fill="#cf7a0a"/><ellipse cx="0.0" cy="57.4" rx="1.50" ry="1.10" fill="#cf7a0a"/><ellipse cx="4.6" cy="54.6" rx="1.75" ry="0.50" fill="#cf7a0a"/><ellipse cx="36.0" cy="57.4" rx="1.50" ry="1.10" fill="#cf7a0a"/><path d="M-4.0 62.2Q0.0 60.4 4.0 62.4Q0.0 64.6 -4.0 62.2Z" fill="#cf7a0a" stroke="#cf7a0a" stroke-width="0.8"/><path d="M32.0 62.2Q36.0 60.4 40.0 62.4Q36.0 64.6 32.0 62.2Z" fill="#cf7a0a" stroke="#cf7a0a" stroke-width="0.8"/><path d="M18.0 59.5L11.8 50.8" stroke="#cf7a0a" stroke-width="2.7" stroke-linecap="round" fill="none"/><path d="M18.0 59.5L24.2 50.0" stroke="#cf7a0a" stroke-width="2.7" stroke-linecap="round" fill="none"/><path d="M18.0 59.5L1.2 76.2" stroke="#cf7a0a" stroke-width="3.4" stroke-linecap="round" fill="none"/><path d="M18.0 59.5L34.8 76.2" stroke="#cf7a0a" stroke-width="3.4" stroke-linecap="round" fill="none"/><ellipse cx="18.0" cy="59.8" rx="3.00" ry="3.20" fill="#cf7a0a"/><path d="M14.4 56.0L21.6 63.4" stroke="#cf7a0a" stroke-width="3.8" stroke-linecap="round" fill="none"/><path d="M21.8 55.6L14.4 63.4" stroke="#cf7a0a" stroke-width="3.8" stroke-linecap="round" fill="none"/><path d="M25.2 69.6L31.4 63.2" stroke="#cf7a0a" stroke-width="2.2" stroke-linecap="round" fill="none"/><path d="M10.8 69.6L5.4 64.0" stroke="#cf7a0a" stroke-width="2.2" stroke-linecap="round" fill="none"/><ellipse cx="8.4" cy="66.8" rx="1.90" ry="1.90" fill="#cf7a0a"/><ellipse cx="28.2" cy="66.6" rx="1.90" ry="1.90" fill="#cf7a0a"/><path d="M15.0 74.6L14.8 81.2" stroke="#cf7a0a" stroke-width="2.9" stroke-linecap="round" fill="none"/><path d="M19.6 74.6L20.6 80.4" stroke="#cf7a0a" stroke-width="2.7" stroke-linecap="round" fill="none"/><path d="M15.0 74.3L19.6 74.3" stroke="#cf7a0a" stroke-width="2.0" stroke-linecap="round" fill="none"/><path d="M20.6 80.4L24.0 83.2" stroke="#cf7a0a" stroke-width="1.1" stroke-linecap="round" fill="none"/><path d="M1.6 80.0L7.4 86.0" stroke="#cf7a0a" stroke-width="2.9" stroke-linecap="round" fill="none"/><path d="M37.6 80.0L43.4 86.0" stroke="#cf7a0a" stroke-width="2.9" stroke-linecap="round" fill="none"/><path d="M-34.4 80.0L-28.6 86.0" stroke="#cf7a0a" stroke-width="2.9" stroke-linecap="round" fill="none"/><path d="M29.0 83.2L33.4 80.8" stroke="#cf7a0a" stroke-width="2.4" stroke-linecap="round" fill="none"/><ellipse cx="28.2" cy="86.1" rx="0.75" ry="0.75" fill="#cf7a0a"/><path d="M18.0 95.5L11.2 83.0" stroke="#cf7a0a" stroke-width="3.0" stroke-linecap="round" fill="none"/><path d="M18.0 95.5L24.0 86.0" stroke="#cf7a0a" stroke-width="3.2" stroke-linecap="round" fill="none"/><path d="M24.0 86.0L23.6 82.6" stroke="#cf7a0a" stroke-width="1.5" stroke-linecap="round" fill="none"/><ellipse cx="18.0" cy="94.6" rx="2.50" ry="2.00" fill="#cf7a0a"/><path d="M12.6 86.2L7.4 89L0.4 93.6L-4 90.6" fill="none" stroke="#cf7a0a" stroke-width="2.3" stroke-linejoin="round"/><path d="M24 87.6L27.6 89.6L35.6 93.6L40 90.4L43.4 89" fill="none" stroke="#cf7a0a" stroke-width="2.3" stroke-linejoin="round"/><ellipse cx="0.0" cy="94.0" rx="1.60" ry="1.40" fill="#cf7a0a"/><ellipse cx="36.0" cy="94.0" rx="1.60" ry="1.40" fill="#cf7a0a"/><ellipse cx="0.0" cy="98.4" rx="3.50" ry="1.60" fill="#cf7a0a"/><ellipse cx="36.0" cy="98.4" rx="3.50" ry="1.60" fill="#cf7a0a"/><path d="M18.8 61.5L32.4 75.4" stroke="#9a5604" stroke-width="0.8" stroke-linecap="round" fill="none"/><path d="M17.0 62.0L4.0 75.6" stroke="#9a5604" stroke-width="0.8" stroke-linecap="round" fill="none"/><path d="M18.6 95.5L24.8 86.6" stroke="#9a5604" stroke-width="0.8" stroke-linecap="round" fill="none"/></g>
</pattern>
<rect x="539.5" y="26" width="432.0" height="71.05" fill="url(#ltop)" filter="url(#rim)"/>
</g>
</svg>
</body></html>
